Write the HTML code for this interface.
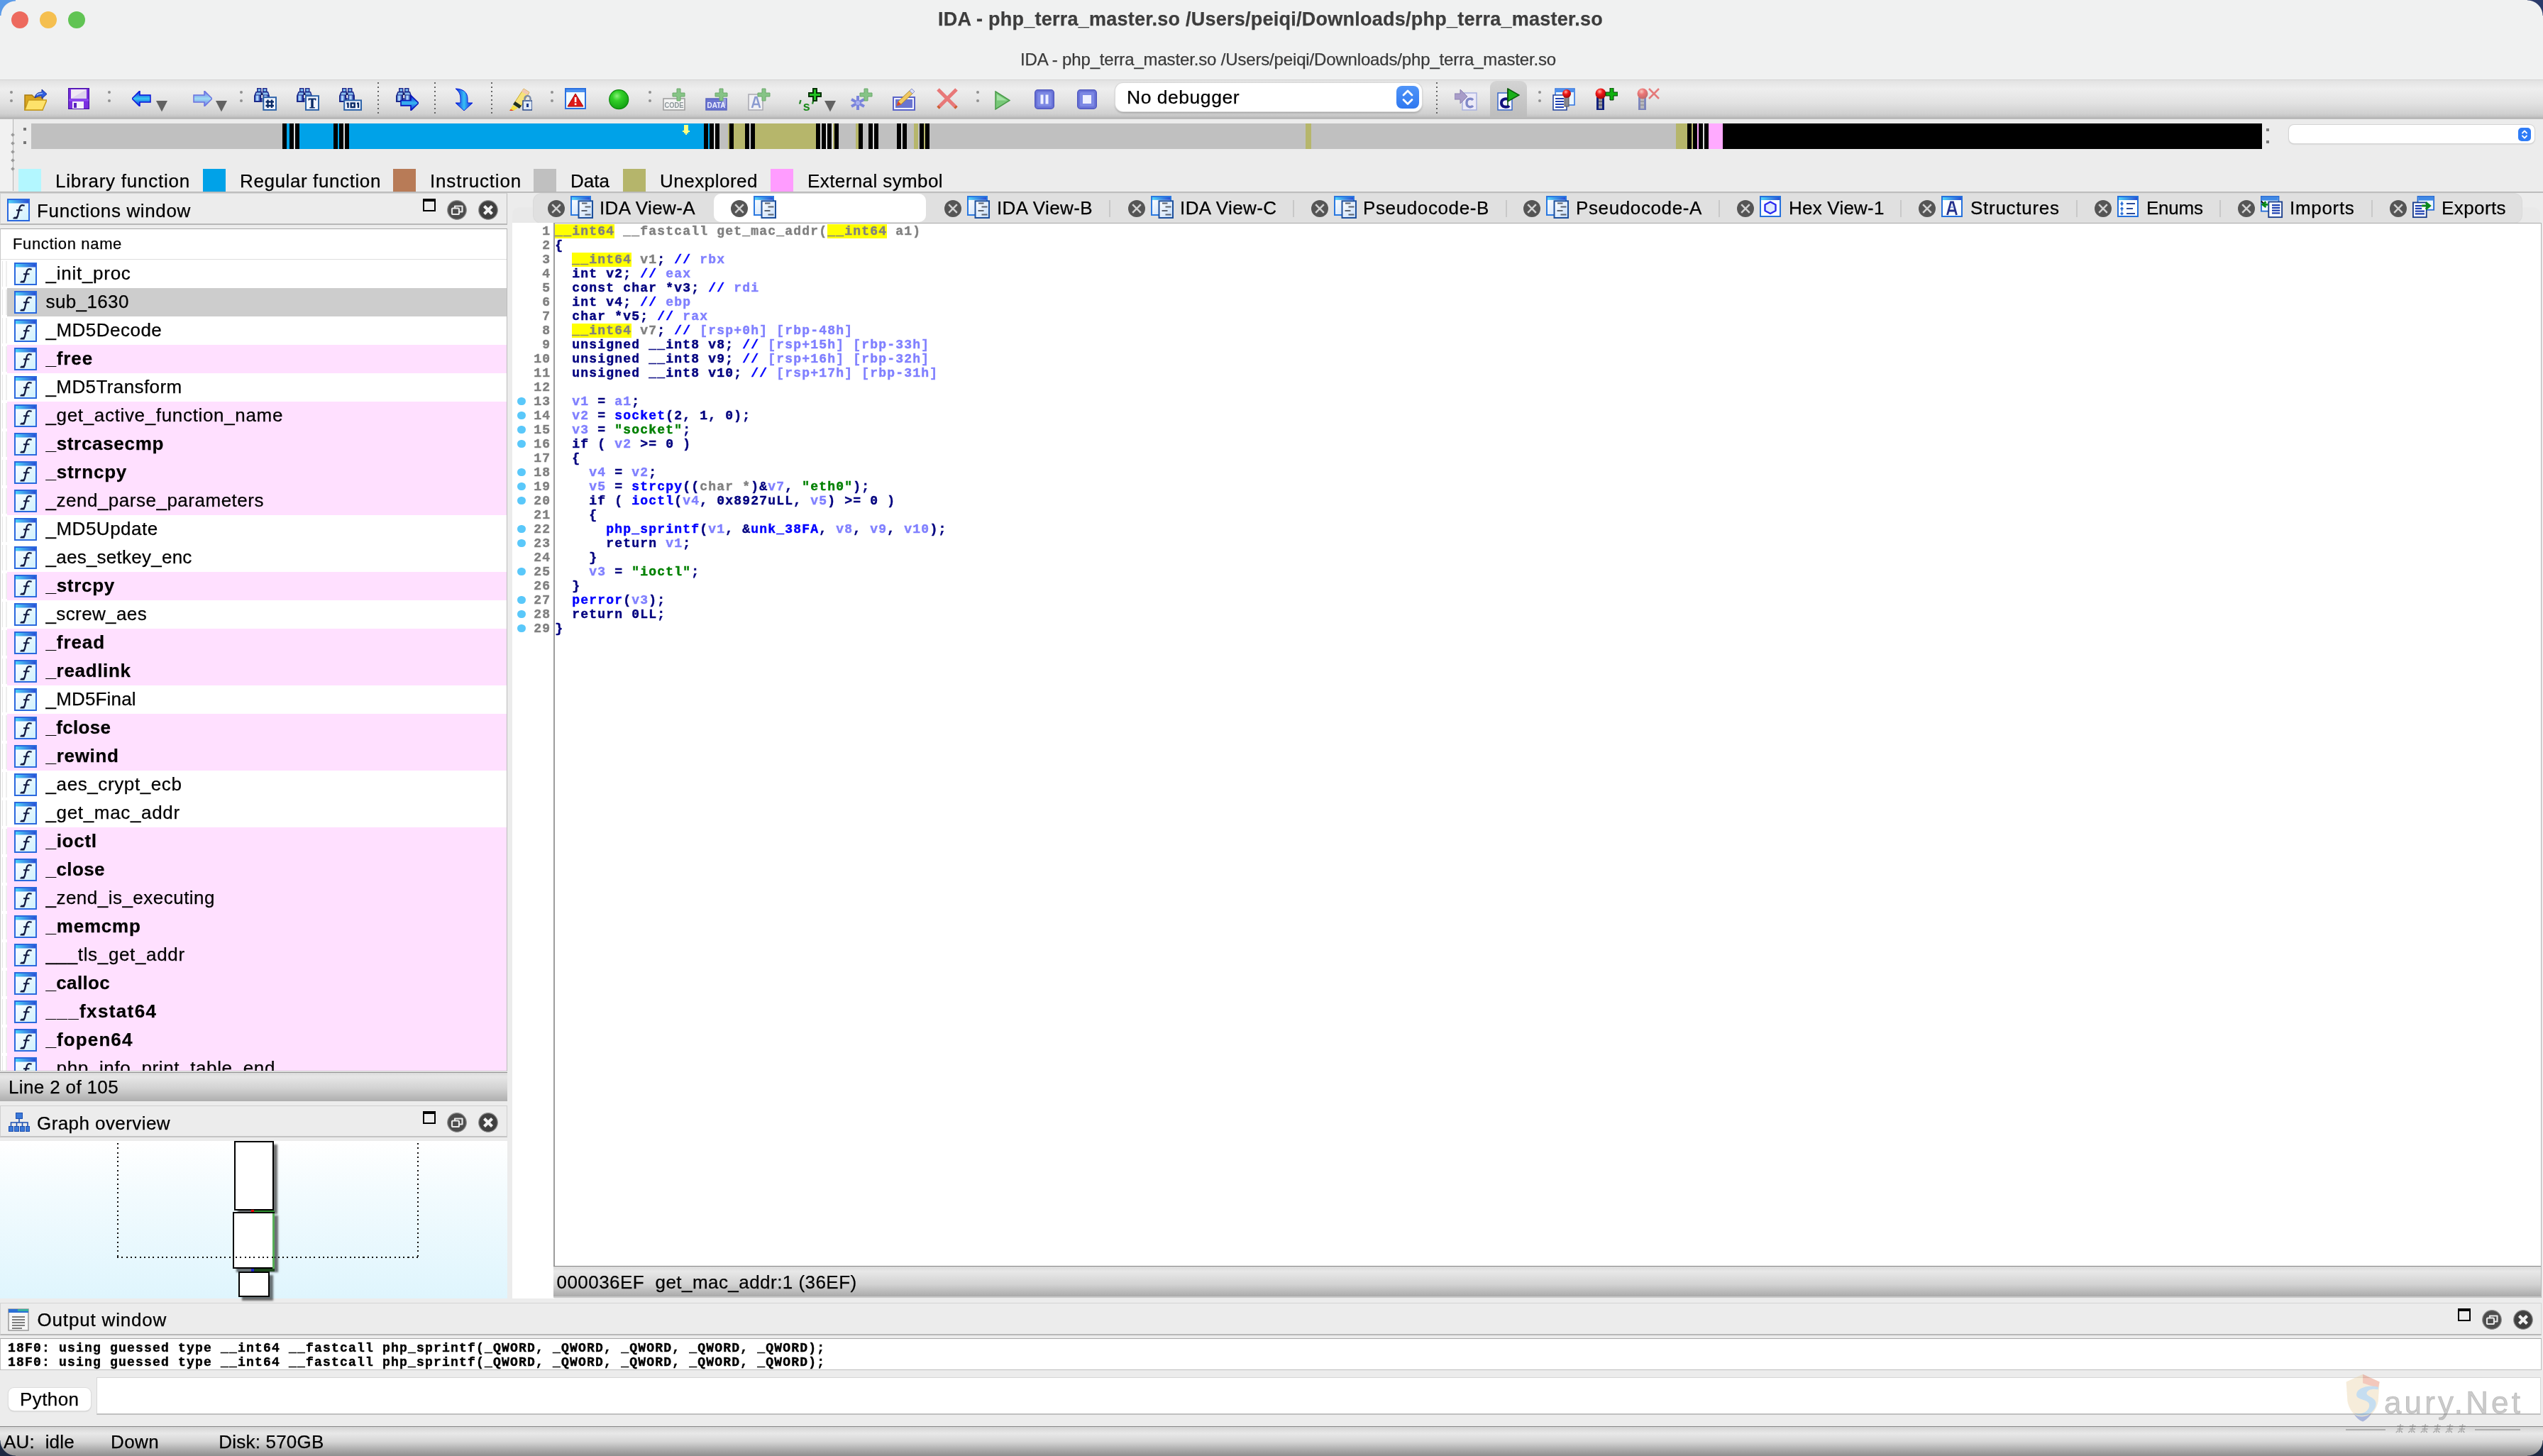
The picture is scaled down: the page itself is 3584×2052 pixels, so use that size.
<!DOCTYPE html>
<html><head><meta charset="utf-8"><title>IDA</title>
<style>
*{box-sizing:border-box;margin:0;padding:0}
html,body{width:3584px;height:2052px;overflow:hidden;background:#ececec}
body{font-family:"Liberation Sans",sans-serif;color:#000;position:relative;transform:translateZ(0);will-change:transform}
.a{position:absolute}
.t{position:absolute;white-space:pre;line-height:1;-webkit-text-stroke:0.25px currentColor}
.ui{font-size:26px}
.mono{font-family:"Liberation Mono",monospace;font-weight:bold;font-size:18px;letter-spacing:1.2px;line-height:20px;-webkit-text-stroke:0.45px currentColor}
</style></head>
<body>
<svg width="0" height="0" style="position:absolute;left:0;top:0"><defs><linearGradient id="fg" x1="0" y1="0" x2="1" y2="1"><stop offset="0" stop-color="#fff"/><stop offset="1" stop-color="#cdf0fd"/></linearGradient><linearGradient id="wt" x1="0" y1="0" x2="1" y2="0"><stop offset="0" stop-color="#4fd4fa"/><stop offset="1" stop-color="#2a50d4"/></linearGradient><linearGradient id="dg" x1="0" y1="0" x2="1" y2="1"><stop offset="0" stop-color="#fff"/><stop offset="1" stop-color="#c4dcf8"/></linearGradient></defs></svg>
<div class="a" style="left:0;top:0;width:3584px;height:112px;background:#f0f1f1"></div>
<div class="a" style="left:16px;top:16px;width:24px;height:24px;border-radius:50%;background:#ed6a5e"></div>
<div class="a" style="left:56px;top:16px;width:24px;height:24px;border-radius:50%;background:#f5bf4f"></div>
<div class="a" style="left:96px;top:16px;width:24px;height:24px;border-radius:50%;background:#61c454"></div>
<div class="t " id="title1" style="left:1322px;top:14px;font-size:27px;font-weight:bold;color:#3d3d3d;letter-spacing:0.245px">IDA - php_terra_master.so /Users/peiqi/Downloads/php_terra_master.so</div>
<div class="t " id="title2" style="left:1438px;top:72px;font-size:24px;color:#3a3a3a;letter-spacing:-0.158px">IDA - php_terra_master.so /Users/peiqi/Downloads/php_terra_master.so</div>
<div class="a" style="left:0;top:112px;width:3584px;height:55.500px;background:linear-gradient(#e2e2e2,#eeeeee 22%,#e2e2e2 58%,#d0d0d0 86%,#c4c4c4 93%,#b4b4b4 97%,#c0c0c0);border-top:1px solid #d4d4d4"></div>
<div class="a" style="left:14px;top:128px;width:4px;height:4px;border-radius:50%;background:#909090"></div><div class="a" style="left:14px;top:140px;width:4px;height:4px;border-radius:50%;background:#909090"></div>
<div class="a" style="left:152px;top:128px;width:4px;height:4px;border-radius:50%;background:#909090"></div><div class="a" style="left:152px;top:140px;width:4px;height:4px;border-radius:50%;background:#909090"></div>
<div class="a" style="left:338px;top:128px;width:4px;height:4px;border-radius:50%;background:#909090"></div><div class="a" style="left:338px;top:140px;width:4px;height:4px;border-radius:50%;background:#909090"></div>
<div class="a" style="left:776px;top:128px;width:4px;height:4px;border-radius:50%;background:#909090"></div><div class="a" style="left:776px;top:140px;width:4px;height:4px;border-radius:50%;background:#909090"></div>
<div class="a" style="left:914px;top:128px;width:4px;height:4px;border-radius:50%;background:#909090"></div><div class="a" style="left:914px;top:140px;width:4px;height:4px;border-radius:50%;background:#909090"></div>
<div class="a" style="left:1376px;top:128px;width:4px;height:4px;border-radius:50%;background:#909090"></div><div class="a" style="left:1376px;top:140px;width:4px;height:4px;border-radius:50%;background:#909090"></div>
<div class="a" style="left:2168px;top:128px;width:4px;height:4px;border-radius:50%;background:#909090"></div><div class="a" style="left:2168px;top:140px;width:4px;height:4px;border-radius:50%;background:#909090"></div>
<div class="a" style="left:532px;top:115.700px;width:2px;height:45px;background:repeating-linear-gradient(#636363 0 2px,transparent 2px 6.050px)"></div>
<div class="a" style="left:611.7px;top:115.700px;width:2px;height:45px;background:repeating-linear-gradient(#636363 0 2px,transparent 2px 6.050px)"></div>
<div class="a" style="left:692px;top:115.700px;width:2px;height:45px;background:repeating-linear-gradient(#636363 0 2px,transparent 2px 6.050px)"></div>
<div class="a" style="left:2024px;top:115.700px;width:2px;height:45px;background:repeating-linear-gradient(#636363 0 2px,transparent 2px 6.050px)"></div>
<svg class="a" style="left:33.5px;top:124px" width="32" height="32" viewBox="0 0 32 32"><path d="M1 10h10l3 3h12v18h-25z" fill="#d9a520" stroke="#a87b10" stroke-width="1.500"/><path d="M6 17h26l-6 14h-25z" fill="#fde26a" stroke="#c89a18" stroke-width="1.500"/><path d="M15 14c1-6 5-8 10-8v-4l7 6.500-7 6.500v-4c-4 0-7 1-10 3z" fill="#2f5fe0" stroke="#1a2f9c" stroke-width="1"/><path d="M18 10c2-2 5-2.500 8-2.500" stroke="#9cc4ff" stroke-width="1.500" fill="none"/></svg>
<svg class="a" style="left:96px;top:124px" width="30" height="30" viewBox="0 0 30 30"><rect x="0.500" y="0.500" width="29" height="29" fill="#7a2fe0" stroke="#4a12a8" stroke-width="1.500"/><rect x="4" y="2" width="22" height="13" fill="#f1e8f4"/><path d="M4 15l22-13v13z" fill="#ded2ee"/><rect x="6" y="19" width="16" height="10" fill="#f4f0fa"/><rect x="8" y="21" width="4" height="7" fill="#5a20c0"/><rect x="1" y="15.500" width="28" height="3" fill="#8d4af0"/></svg>
<svg class="a" style="left:186px;top:128px" width="27" height="22" viewBox="0 0 27 22"><defs><linearGradient id="ba" x1="0" y1="0" x2="0" y2="1"><stop offset="0" stop-color="#0a1adf"/><stop offset=".5" stop-color="#38c8f0"/><stop offset="1" stop-color="#0a1adf"/></linearGradient></defs><path d="M0 11l11-11v6h15v10h-15v6z" fill="url(#ba)" stroke="#0a14d8" stroke-width="1.500"/></svg>
<svg class="a" style="left:220px;top:142px" width="16" height="16" viewBox="0 0 16 16"><path d="M0 0h16l-8 15.500z" fill="#626262"/></svg>
<svg class="a" style="left:272px;top:128px" width="27" height="22" viewBox="0 0 27 22"><defs><linearGradient id="fa" x1="0" y1="0" x2="0" y2="1"><stop offset="0" stop-color="#6a74e8"/><stop offset=".5" stop-color="#9edcf2"/><stop offset="1" stop-color="#6a74e8"/></linearGradient></defs><path d="M27 11l-11-11v6h-15v10h15v6z" fill="url(#fa)" stroke="#6a72e0" stroke-width="1.500"/></svg>
<svg class="a" style="left:304px;top:142px" width="16" height="16" viewBox="0 0 16 16"><path d="M0 0h16l-8 15.500z" fill="#626262"/></svg>
<svg class="a" style="left:358px;top:124px" width="32" height="32" viewBox="0 0 32 32"><g><defs><linearGradient id="bn" x1="0" y1="0" x2="1" y2="0"><stop offset="0" stop-color="#5a8ae0"/><stop offset=".45" stop-color="#bfe4ff"/><stop offset="1" stop-color="#3a5cc0"/></linearGradient></defs><rect x="4" y="0" width="6.500" height="6" fill="#232a8c"/><rect x="12" y="0" width="6.500" height="6" fill="#232a8c"/><rect x="5.500" y="1.500" width="3.500" height="3" fill="#7fc4f4"/><rect x="13.500" y="1.500" width="3.500" height="3" fill="#7fc4f4"/><path d="M2.500 5h8.500v15h-11v-9z" fill="#1c2a8a"/><path d="M11.500 5h8.500l2 6v9h-10.500z" fill="#1c2a8a"/><rect x="9.500" y="7" width="3.500" height="6" fill="#181c60"/><rect x="10.300" y="10" width="2" height="4" fill="#fff"/><path d="M3.500 6.500h6v3h-7z" fill="#8cc0f0"/><path d="M12.500 6.500h6.500l1 3h-7.500z" fill="#8cc0f0"/><rect x="2" y="10.500" width="6" height="7.500" fill="url(#bn)"/><rect x="13.500" y="10.500" width="6" height="7.500" fill="url(#bn)"/></g><rect x="13.300" y="13.200" width="17.700" height="17.700" fill="#f2f6ff" stroke="#2c62a8" stroke-width="2"/><path d="M16.500 19.500h11.500M16.500 25h11.500M19.500 16.500v11.500M25 16.500v11.500" stroke="#0a2a66" stroke-width="2.400"/></svg>
<svg class="a" style="left:418px;top:124px" width="32" height="32" viewBox="0 0 32 32"><g><defs><linearGradient id="bn" x1="0" y1="0" x2="1" y2="0"><stop offset="0" stop-color="#5a8ae0"/><stop offset=".45" stop-color="#bfe4ff"/><stop offset="1" stop-color="#3a5cc0"/></linearGradient></defs><rect x="4" y="0" width="6.500" height="6" fill="#232a8c"/><rect x="12" y="0" width="6.500" height="6" fill="#232a8c"/><rect x="5.500" y="1.500" width="3.500" height="3" fill="#7fc4f4"/><rect x="13.500" y="1.500" width="3.500" height="3" fill="#7fc4f4"/><path d="M2.500 5h8.500v15h-11v-9z" fill="#1c2a8a"/><path d="M11.500 5h8.500l2 6v9h-10.500z" fill="#1c2a8a"/><rect x="9.500" y="7" width="3.500" height="6" fill="#181c60"/><rect x="10.300" y="10" width="2" height="4" fill="#fff"/><path d="M3.500 6.500h6v3h-7z" fill="#8cc0f0"/><path d="M12.500 6.500h6.500l1 3h-7.500z" fill="#8cc0f0"/><rect x="2" y="10.500" width="6" height="7.500" fill="url(#bn)"/><rect x="13.500" y="10.500" width="6" height="7.500" fill="url(#bn)"/></g><rect x="13" y="11.200" width="18" height="19.700" fill="#f2f6ff" stroke="#2c62a8" stroke-width="2"/><path d="M16.500 14.500h11v3h-1.500v-1h-2.300v10.500h2v1.500h-7.400v-1.500h2v-10.500h-2.300v1h-1.500z" fill="#0a2a66"/></svg>
<svg class="a" style="left:478px;top:124px" width="32" height="32" viewBox="0 0 32 32"><g><defs><linearGradient id="bn" x1="0" y1="0" x2="1" y2="0"><stop offset="0" stop-color="#5a8ae0"/><stop offset=".45" stop-color="#bfe4ff"/><stop offset="1" stop-color="#3a5cc0"/></linearGradient></defs><rect x="4" y="0" width="6.500" height="6" fill="#232a8c"/><rect x="12" y="0" width="6.500" height="6" fill="#232a8c"/><rect x="5.500" y="1.500" width="3.500" height="3" fill="#7fc4f4"/><rect x="13.500" y="1.500" width="3.500" height="3" fill="#7fc4f4"/><path d="M2.500 5h8.500v15h-11v-9z" fill="#1c2a8a"/><path d="M11.500 5h8.500l2 6v9h-10.500z" fill="#1c2a8a"/><rect x="9.500" y="7" width="3.500" height="6" fill="#181c60"/><rect x="10.300" y="10" width="2" height="4" fill="#fff"/><path d="M3.500 6.500h6v3h-7z" fill="#8cc0f0"/><path d="M12.500 6.500h6.500l1 3h-7.500z" fill="#8cc0f0"/><rect x="2" y="10.500" width="6" height="7.500" fill="url(#bn)"/><rect x="13.500" y="10.500" width="6" height="7.500" fill="url(#bn)"/></g><rect x="7.200" y="17.400" width="23.800" height="13.500" fill="#f2f6ff" stroke="#2c62a8" stroke-width="2"/><path d="M12.500 20.500v7.500M10.500 21.800h2M27 20.500v7.500M25 21.800h2" stroke="#0a2a66" stroke-width="2.400" fill="none"/><rect x="16.700" y="21.500" width="5" height="5.500" fill="none" stroke="#0a2a66" stroke-width="2.400"/></svg>
<svg class="a" style="left:557.6px;top:124px" width="32" height="32" viewBox="0 0 32 32"><g><defs><linearGradient id="bn" x1="0" y1="0" x2="1" y2="0"><stop offset="0" stop-color="#5a8ae0"/><stop offset=".45" stop-color="#bfe4ff"/><stop offset="1" stop-color="#3a5cc0"/></linearGradient></defs><rect x="4" y="0" width="6.500" height="6" fill="#232a8c"/><rect x="12" y="0" width="6.500" height="6" fill="#232a8c"/><rect x="5.500" y="1.500" width="3.500" height="3" fill="#7fc4f4"/><rect x="13.500" y="1.500" width="3.500" height="3" fill="#7fc4f4"/><path d="M2.500 5h8.500v15h-11v-9z" fill="#1c2a8a"/><path d="M11.500 5h8.500l2 6v9h-10.500z" fill="#1c2a8a"/><rect x="9.500" y="7" width="3.500" height="6" fill="#181c60"/><rect x="10.300" y="10" width="2" height="4" fill="#fff"/><path d="M3.500 6.500h6v3h-7z" fill="#8cc0f0"/><path d="M12.500 6.500h6.500l1 3h-7.500z" fill="#8cc0f0"/><rect x="2" y="10.500" width="6" height="7.500" fill="url(#bn)"/><rect x="13.500" y="10.500" width="6" height="7.500" fill="url(#bn)"/></g><defs><linearGradient id="bna" x1="0" y1="0" x2="0" y2="1"><stop offset="0" stop-color="#0a1adf"/><stop offset=".5" stop-color="#38b8f0"/><stop offset="1" stop-color="#0a1adf"/></linearGradient></defs><path d="M7 17.500h14v-7l11 10.700-11 10.700v-7h-14z" fill="url(#bna)" stroke="#0a14b8" stroke-width="1.600"/></svg>
<svg class="a" style="left:641px;top:124px" width="26" height="32" viewBox="0 0 26 32"><defs><linearGradient id="da" x1="0" y1="0" x2="1" y2="0"><stop offset="0" stop-color="#0a1adf"/><stop offset=".5" stop-color="#38c0f4"/><stop offset="1" stop-color="#0a1adf"/></linearGradient></defs><path d="M1 1c10 0 17 5 17 14v6h7l-12 11-12-11h7v-6c0-6-2-10-7-14z" fill="url(#da)" stroke="#0a20d8" stroke-width="1"/></svg>
<svg class="a" style="left:718px;top:124px" width="32" height="32" viewBox="0 0 32 32"><path d="M20 1l8 5-12 20-9-5z" fill="#f6e27a" stroke="#c8a828" stroke-width="1"/><path d="M20 1l8 5-3 4-8-5z" fill="#f3c8b0"/><path d="M8 19l9 6-3 4-9-6z" fill="#203020"/><path d="M5 24l7 4-6 4h-6z" fill="#f4e040"/><path d="M2 30l4 2h-6z" fill="#e03020"/><rect x="19" y="18" width="13" height="13" fill="#dfe8f4" stroke="#2a4a8c" stroke-width="1.500"/><path d="M21.500 18v-3a4 4 0 0 1 8 0v3" fill="none" stroke="#7a8aa8" stroke-width="2.400"/><rect x="24" y="22" width="3" height="5" fill="#1a3a8c"/></svg>
<svg class="a" style="left:796px;top:124px" width="30" height="30" viewBox="0 0 30 30"><rect x="1" y="1" width="28" height="28" fill="#f2fbff" stroke="#2a70e0" stroke-width="2"/><rect x="2" y="2" width="26" height="4" fill="#4a90f0"/><path d="M15 8l11 18h-22z" fill="#e01818" stroke="#a00808" stroke-width="1"/><rect x="13.800" y="13" width="2.600" height="7" fill="#fff"/><rect x="13.800" y="21.500" width="2.600" height="2.600" fill="#fff"/></svg>
<svg class="a" style="left:857.5px;top:125.5px" width="29" height="29" viewBox="0 0 29 29"><defs><radialGradient id="gb" cx=".4" cy=".32" r=".7"><stop offset="0" stop-color="#8af07a"/><stop offset=".35" stop-color="#32d028"/><stop offset="1" stop-color="#12a012"/></radialGradient></defs><circle cx="14.200" cy="14.200" r="13.500" fill="url(#gb)" stroke="#0c880c" stroke-width="1.200"/></svg>
<svg class="a" style="left:933.7px;top:124px" width="32" height="32" viewBox="0 0 32 32"><rect x="1" y="15" width="30" height="16" fill="#f4f4f4" stroke="#9a9a9a" stroke-width="1.500"/><text x="2.500" y="28" font-family="Liberation Sans" font-weight="bold" font-size="11.500" fill="#8a9498" textLength="27" lengthAdjust="spacingAndGlyphs">CODE</text><path d="M14 7h6v-6h5v6h6v5h-6v6h-5v-6h-6z" fill="#86c486" stroke="#6aa86a" stroke-width="1"/></svg>
<svg class="a" style="left:994px;top:124px" width="32" height="32" viewBox="0 0 32 32"><rect x="1" y="15" width="29" height="16" fill="#6a74d0" stroke="#5a64c0" stroke-width="1.500"/><rect x="24" y="15" width="5" height="10" fill="#9aa2e0"/><text x="2.500" y="28" font-family="Liberation Sans" font-weight="bold" font-size="11.500" fill="#eef0ff" textLength="26" lengthAdjust="spacingAndGlyphs">DATA</text><path d="M14 7h6v-6h5v6h6v5h-6v6h-5v-6h-6z" fill="#86c486" stroke="#6aa86a" stroke-width="1"/></svg>
<svg class="a" style="left:1054px;top:124px" width="32" height="32" viewBox="0 0 32 32"><rect x="1" y="9" width="20" height="22" fill="#f0f0f4" stroke="#a8a8b0" stroke-width="1.500"/><path d="M6 28l4.500-15h2l4.500 15M8 23h7" fill="none" stroke="#8a9ad0" stroke-width="2.600"/><path d="M14 7h6v-6h5v6h6v5h-6v6h-5v-6h-6z" fill="#86c486" stroke="#6aa86a" stroke-width="1"/></svg>
<svg class="a" style="left:1125px;top:124px" width="34" height="34" viewBox="0 0 34 34"><text x="6.300" y="31.500" font-family="Liberation Mono" font-weight="bold" font-size="18" fill="#1a8a1a">s</text><path d="M2 22.500l1.500-5.500M20 22.500l1.500-5.500" stroke="#2a8a2a" stroke-width="2.400"/><path d="M15 7h6v-6h5v6h6v5h-6v6h-5v-6h-6z" fill="#22c022" stroke="#033003" stroke-width="2"/></svg>
<svg class="a" style="left:1162px;top:142px" width="16" height="16" viewBox="0 0 16 16"><path d="M0 0h16l-8 15.500z" fill="#626262"/></svg>
<svg class="a" style="left:1197.8px;top:124px" width="32" height="32" viewBox="0 0 32 32"><path d="M11 11v20M2 16l18 10M2 26l18-10" stroke="#7a84dc" stroke-width="4"/><circle cx="11" cy="21" r="3" fill="#aab2f0"/><path d="M14 7h6v-6h5v6h6v5h-6v6h-5v-6h-6z" fill="#86c486" stroke="#6aa86a" stroke-width="1"/></svg>
<svg class="a" style="left:1258px;top:124px" width="32" height="32" viewBox="0 0 32 32"><rect x="1" y="13" width="30" height="18" fill="#f2f2ff" stroke="#5a64c8" stroke-width="2"/><rect x="4" y="16" width="24" height="12" fill="#6a74d0"/><path d="M27 1l4 4-19 18-6 2 2-6z" fill="#f0c860" stroke="#b08828" stroke-width="1"/><path d="M27 1l4 4-3 3-4-4z" fill="#d8dcf8" stroke="#8a92c8" stroke-width="1"/><path d="M6 25l2-6 4 4z" fill="#e04030"/></svg>
<svg class="a" style="left:1320px;top:124px" width="30" height="30" viewBox="0 0 30 30"><path d="M2 2l26 26M28 2l-26 26" stroke="#e87878" stroke-width="5"/><path d="M2 28l2-2M26 26l2 2" stroke="#c86030" stroke-width="4"/></svg>
<svg class="a" style="left:1402px;top:128px" width="22" height="27" viewBox="0 0 22 27"><path d="M1 1l20 12.500-20 12.500z" fill="#78c878" stroke="#4a9a4a" stroke-width="1.500"/><path d="M3 5l14 8.500h-14z" fill="#a4e0a4"/></svg>
<svg class="a" style="left:1458px;top:126px" width="28" height="28" viewBox="0 0 28 28"><rect x="0.750" y="0.750" width="26.500" height="26.500" rx="4" fill="#6a74d8" stroke="#5058c0" stroke-width="1.500"/><rect x="4" y="4" width="20" height="20" rx="2" fill="#7c88e4"/><rect x="8.500" y="7.500" width="4" height="13" fill="#eef0ff"/><rect x="15.500" y="7.500" width="4" height="13" fill="#eef0ff"/></svg>
<svg class="a" style="left:1518px;top:126px" width="28" height="28" viewBox="0 0 28 28"><rect x="0.750" y="0.750" width="26.500" height="26.500" rx="4" fill="#6a74d8" stroke="#5058c0" stroke-width="1.500"/><rect x="4" y="4" width="20" height="20" rx="2" fill="#7c88e4"/><rect x="8" y="8" width="12" height="12" fill="#eef0ff"/></svg>
<div class="a" style="left:1572px;top:117px;width:432px;height:40px;background:#fff;border-radius:11px;box-shadow:0 0 0 1px #d8d8d8,0 1.500px 3px rgba(0,0,0,.28)"></div>
<div class="t " id="nodbg" style="left:1588px;top:123.5px;font-size:26.5px;letter-spacing:0.525px">No debugger</div>
<div class="a" style="left:1968px;top:121px;width:32px;height:32px;background:linear-gradient(#4f94f8,#2f78f0);border-radius:8px"></div>
<svg class="a" style="left:1968px;top:121px" width="32" height="32" viewBox="0 0 32 32"><path d="M10 13l6-6 6 6M10 19.500l6 6 6-6" stroke="#fff" stroke-width="2.800" fill="none" stroke-linecap="round" stroke-linejoin="round"/></svg>
<svg class="a" style="left:2049.7px;top:124px" width="32" height="32" viewBox="0 0 32 32"><rect x="11" y="7" width="20" height="24" fill="#eceaf8" stroke="#a8b0e0" stroke-width="1.500"/><path d="M26 17c-2-2.500-9-3-9 4s7 6.500 9 4" fill="none" stroke="#8088c8" stroke-width="3.400"/><path d="M0 8h8v-6l10 10-10 10v-6h-8z" fill="#a89cc8" stroke="#8a80b0" stroke-width="1"/></svg>
<div class="a" style="left:2100px;top:114px;width:52px;height:52px;background:linear-gradient(#d4d4d4,#bcbcbc);border-radius:9px 9px 0 0"></div>
<svg class="a" style="left:2110px;top:124px" width="32" height="32" viewBox="0 0 32 32"><rect x="1" y="7" width="20" height="24" fill="#f4f4ff" stroke="#3a68c8" stroke-width="1.500"/><path d="M17 17c-2-2.500-11-3-11 4s9 6.500 11 4" fill="none" stroke="#10107c" stroke-width="4"/><path d="M15 1l16 9-16 9z" fill="#18b018" stroke="#0a600a" stroke-width="1.500"/><path d="M15 1v24" stroke="#0a500a" stroke-width="1.500"/></svg>
<svg class="a" style="left:2188px;top:124px" width="32" height="32" viewBox="0 0 32 32"><defs><radialGradient id="rb" cx=".4" cy=".3" r=".7"><stop offset="0" stop-color="#ffb0a0"/><stop offset=".4" stop-color="#f01818"/><stop offset="1" stop-color="#a00808"/></radialGradient></defs><rect x="4" y="1" width="27" height="23" fill="#eaf6ff" stroke="#2a70e0" stroke-width="1.500"/><rect x="5" y="2" width="25" height="4" fill="#4a90f0"/><rect x="1" y="10" width="19" height="21" fill="#fff" stroke="#1c3f9c" stroke-width="1.500"/><path d="M4 15h12M4 19h12M4 23h12M4 27h12" stroke="#1c3fb0" stroke-width="2.200"/><rect x="17" y="12" width="6" height="14" fill="#8a8a90" stroke="#55555c" stroke-width="1"/><circle cx="20" cy="8" r="6" fill="url(#rb)"/></svg>
<svg class="a" style="left:2248px;top:124px" width="32" height="32" viewBox="0 0 32 32"><defs><radialGradient id="rb2" cx=".4" cy=".3" r=".7"><stop offset="0" stop-color="#ffb0a0"/><stop offset=".4" stop-color="#f01818"/><stop offset="1" stop-color="#a00808"/></radialGradient></defs><rect x="2" y="13" width="11" height="18" fill="#10207c"/><rect x="5" y="14" width="5" height="15" fill="#9a9aa0"/><path d="M5 19h5M5 24h5" stroke="#55555c" stroke-width="1.500"/><circle cx="8" cy="8" r="7.500" fill="url(#rb2)"/><path d="M15 6h6v-6h5v6h6v5h-6v6h-5v-6h-6z" fill="#10b010" stroke="#043c04" stroke-width="1"/></svg>
<svg class="a" style="left:2307.4px;top:124px" width="32" height="32" viewBox="0 0 32 32"><defs><radialGradient id="rb3" cx=".4" cy=".3" r=".7"><stop offset="0" stop-color="#ffb0a0"/><stop offset=".4" stop-color="#f01818"/><stop offset="1" stop-color="#a00808"/></radialGradient></defs><g opacity=".55"><rect x="2" y="13" width="11" height="18" fill="#3040a0"/><rect x="5" y="14" width="5" height="15" fill="#9a9aa0"/><path d="M5 19h5M5 24h5" stroke="#55555c" stroke-width="1.500"/><circle cx="8" cy="8" r="7.500" fill="url(#rb3)"/><path d="M17 1l14 14M31 1l-14 14" stroke="#e02020" stroke-width="2.600"/></g></svg>
<div class="a" style="left:44px;top:174px;width:3144px;height:36px;background:#c0c0c0"></div>
<div class="a" style="left:404px;top:174px;width:588px;height:36px;background:#00a2e8"></div>
<div class="a" style="left:398px;top:174px;width:6px;height:36px;background:#000"></div>
<div class="a" style="left:408px;top:174px;width:6px;height:36px;background:#000"></div>
<div class="a" style="left:414px;top:174px;width:2px;height:36px;background:#dcdcdc"></div>
<div class="a" style="left:416px;top:174px;width:6px;height:36px;background:#000"></div>
<div class="a" style="left:470px;top:174px;width:6px;height:36px;background:#000"></div>
<div class="a" style="left:478px;top:174px;width:6px;height:36px;background:#000"></div>
<div class="a" style="left:484px;top:174px;width:2px;height:36px;background:#dcdcdc"></div>
<div class="a" style="left:486px;top:174px;width:6px;height:36px;background:#000"></div>
<div class="a" style="left:992px;top:174px;width:6px;height:36px;background:#000"></div>
<div class="a" style="left:998px;top:174px;width:2px;height:36px;background:#00a2e8"></div>
<div class="a" style="left:1000px;top:174px;width:6px;height:36px;background:#000"></div>
<div class="a" style="left:1006px;top:174px;width:2px;height:36px;background:#dcdcdc"></div>
<div class="a" style="left:1008px;top:174px;width:6px;height:36px;background:#000"></div>
<div class="a" style="left:1026px;top:174px;width:2px;height:36px;background:#b6b66b"></div>
<div class="a" style="left:1028px;top:174px;width:6px;height:36px;background:#000"></div>
<div class="a" style="left:1034px;top:174px;width:16px;height:36px;background:#b6b66b"></div>
<div class="a" style="left:1050px;top:174px;width:6px;height:36px;background:#000"></div>
<div class="a" style="left:1056px;top:174px;width:2px;height:36px;background:#dcdcdc"></div>
<div class="a" style="left:1058px;top:174px;width:6px;height:36px;background:#000"></div>
<div class="a" style="left:1064px;top:174px;width:86px;height:36px;background:#b6b66b"></div>
<div class="a" style="left:1150px;top:174px;width:6px;height:36px;background:#000"></div>
<div class="a" style="left:1156px;top:174px;width:2px;height:36px;background:#dcdcdc"></div>
<div class="a" style="left:1158px;top:174px;width:6px;height:36px;background:#000"></div>
<div class="a" style="left:1164px;top:174px;width:2px;height:36px;background:#dcdcdc"></div>
<div class="a" style="left:1166px;top:174px;width:6px;height:36px;background:#000"></div>
<div class="a" style="left:1172px;top:174px;width:2px;height:36px;background:#dcdcdc"></div>
<div class="a" style="left:1174px;top:174px;width:2px;height:36px;background:#b6b66b"></div>
<div class="a" style="left:1176px;top:174px;width:6px;height:36px;background:#000"></div>
<div class="a" style="left:1206px;top:174px;width:4px;height:36px;background:#b6b66b"></div>
<div class="a" style="left:1210px;top:174px;width:6px;height:36px;background:#000"></div>
<div class="a" style="left:1224px;top:174px;width:6px;height:36px;background:#000"></div>
<div class="a" style="left:1230px;top:174px;width:2px;height:36px;background:#dcdcdc"></div>
<div class="a" style="left:1232px;top:174px;width:6px;height:36px;background:#000"></div>
<div class="a" style="left:1264px;top:174px;width:6px;height:36px;background:#000"></div>
<div class="a" style="left:1270px;top:174px;width:2px;height:36px;background:#dcdcdc"></div>
<div class="a" style="left:1272px;top:174px;width:6px;height:36px;background:#000"></div>
<div class="a" style="left:1288px;top:174px;width:6px;height:36px;background:#b6b66b"></div>
<div class="a" style="left:1296px;top:174px;width:6px;height:36px;background:#000"></div>
<div class="a" style="left:1302px;top:174px;width:2px;height:36px;background:#b6b66b"></div>
<div class="a" style="left:1304px;top:174px;width:6px;height:36px;background:#000"></div>
<div class="a" style="left:1840px;top:174px;width:8px;height:36px;background:#b6b66b"></div>
<div class="a" style="left:2362px;top:174px;width:16px;height:36px;background:#b6b66b"></div>
<div class="a" style="left:2378px;top:174px;width:6px;height:36px;background:#000"></div>
<div class="a" style="left:2384px;top:174px;width:2px;height:36px;background:#b6b66b"></div>
<div class="a" style="left:2386px;top:174px;width:6px;height:36px;background:#000"></div>
<div class="a" style="left:2392px;top:174px;width:2px;height:36px;background:#ffaaff"></div>
<div class="a" style="left:2394px;top:174px;width:6px;height:36px;background:#000"></div>
<div class="a" style="left:2400px;top:174px;width:2px;height:36px;background:#dcdcdc"></div>
<div class="a" style="left:2402px;top:174px;width:6px;height:36px;background:#000"></div>
<div class="a" style="left:2408px;top:174px;width:20px;height:36px;background:#ffaaff"></div>
<div class="a" style="left:2428px;top:174px;width:760px;height:36px;background:#000"></div>
<svg class="a" style="left:962px;top:176px" width="10" height="14" viewBox="0 0 10 14"><path d="M2 0h6v8h2v2h-2v2h-2v2h-2v-2h-2v-2h-2v-2h2z" fill="#ffff80"/></svg>
<div class="a" style="left:33px;top:180px;width:4px;height:4px;background:#777"></div>
<div class="a" style="left:33px;top:199px;width:4px;height:4px;background:#777"></div>
<div class="a" style="left:3194px;top:181px;width:4px;height:4px;background:#777"></div>
<div class="a" style="left:3194px;top:198px;width:4px;height:4px;background:#777"></div>
<div class="a" style="left:0;top:168px;width:17.500px;height:101px;background:#f1f1f1"></div>
<div class="a" style="left:17.500px;top:168px;width:1.500px;height:101px;background:#b4b4b4"></div>
<div class="a" style="left:16px;top:188px;width:4px;height:4px;background:#9a9a9a;transform:rotate(45deg)"></div>
<div class="a" style="left:16px;top:200px;width:4px;height:4px;background:#9a9a9a;transform:rotate(45deg)"></div>
<div class="a" style="left:16px;top:212px;width:4px;height:4px;background:#9a9a9a;transform:rotate(45deg)"></div>
<div class="a" style="left:16px;top:224px;width:4px;height:4px;background:#9a9a9a;transform:rotate(45deg)"></div>
<div class="a" style="left:16px;top:236px;width:4px;height:4px;background:#9a9a9a;transform:rotate(45deg)"></div>
<div class="a" style="left:3226px;top:176px;width:346px;height:26px;background:#fff;border-radius:7px;box-shadow:0 0 0 1px #d4d4d4,0 1px 2px rgba(0,0,0,.25)"></div>
<div class="a" style="left:3549px;top:180px;width:18px;height:19px;background:#2f7cf6;border-radius:5px"></div>
<svg class="a" style="left:3549px;top:180px" width="18" height="19" viewBox="0 0 18 19"><path d="M6 7.5l3-3 3 3M6 11.500l3 3 3-3" stroke="#fff" stroke-width="1.8" fill="none" stroke-linecap="round" stroke-linejoin="round"/></svg>
<div class="a" style="left:26px;top:238px;width:32px;height:32px;background:#b3f7ff"></div>
<div class="t lg" style="left:78px;top:241.8px;font-size:26px;letter-spacing:0.765px">Library function</div>
<div class="a" style="left:286px;top:238px;width:32px;height:32px;background:#00a2e8"></div>
<div class="t lg" style="left:338px;top:241.8px;font-size:26px;letter-spacing:0.604px">Regular function</div>
<div class="a" style="left:554px;top:238px;width:32px;height:32px;background:#b87b57"></div>
<div class="t lg" style="left:606px;top:241.8px;font-size:26px;letter-spacing:0.823px">Instruction</div>
<div class="a" style="left:752px;top:238px;width:32px;height:32px;background:#c0c0c0"></div>
<div class="t lg" style="left:804px;top:241.8px;font-size:26px;letter-spacing:0.02px">Data</div>
<div class="a" style="left:878px;top:238px;width:32px;height:32px;background:#b5b56b"></div>
<div class="t lg" style="left:930px;top:241.8px;font-size:26px;letter-spacing:0.503px">Unexplored</div>
<div class="a" style="left:1086px;top:238px;width:32px;height:32px;background:#ff9cff"></div>
<div class="t lg" style="left:1138px;top:241.8px;font-size:26px;letter-spacing:0.403px">External symbol</div>
<div class="a" style="left:0;top:269.500px;width:3584px;height:2px;background:linear-gradient(#b0b0b0,#c8c8c8)"></div>
<div class="a" style="left:0;top:272px;width:715px;height:44.700px;background:#ececec;border:1px solid #d4d4d4;border-right:1.300px solid #bcbcbc;border-bottom:2px solid #b8b8b8"></div>
<svg class="a" style="left:10px;top:280px" width="32" height="32" viewBox="0 0 32 32"><rect x="1" y="1" width="30" height="30" fill="url(#fg)" stroke="#2a68de" stroke-width="2"/><rect x="2" y="2" width="28" height="4.500" fill="url(#wt)"/><path d="M23.500 9.500c-3.800-1.200-5.400.8-6 3.800l-2.600 11c-.5 2.200-1.600 3-4 2.600" stroke="#121a40" stroke-width="2.300" fill="none" stroke-linecap="square"/><path d="M13 16.200h8.500M8.500 27.500h6" stroke="#121a40" stroke-width="2" stroke-linecap="butt"/></svg>
<div class="t " id="fwt" style="left:52px;top:284px;font-size:26px;letter-spacing:0.647px">Functions window</div>
<div class="a" style="left:596px;top:280px;width:18px;height:18px;border:2px solid #000;border-top-width:4px;background:#ededed"></div>
<svg class="a" style="left:629px;top:281px" width="30" height="30" viewBox="0 0 30 30"><circle cx="15" cy="15" r="13.300" fill="#4c4c4c"/><circle cx="15" cy="15" r="13.300" fill="none" stroke="#8e8e8e" stroke-width="1.200"/><rect x="8" y="12.500" width="10" height="8.500" rx="1.500" fill="none" stroke="#e8e8e8" stroke-width="2.200"/><path d="M12 12v-2.500h10.500v8h-4" fill="none" stroke="#e8e8e8" stroke-width="2.200" stroke-linejoin="round"/></svg>
<svg class="a" style="left:673px;top:281px" width="30" height="30" viewBox="0 0 30 30"><circle cx="15" cy="15" r="13.300" fill="#404040"/><circle cx="15" cy="15" r="13.300" fill="none" stroke="#8e8e8e" stroke-width="1.200"/><path d="M9.500 9.500l11 11M20.500 9.500l-11 11" stroke="#f2f2f2" stroke-width="4.200" stroke-linecap="butt"/></svg>
<div class="a" style="left:0;top:322px;width:715px;height:1188px;background:#fff;border:1px solid #c8c8c8;border-top:1.300px solid #a8a8a8;border-right:1.300px solid #bcbcbc;overflow:hidden" id="flist">
<div class="t " id="fnh" style="left:17px;top:9.5px;font-size:22px;letter-spacing:0.652px">Function name</div>
<div class="a" style="left:0;top:41.500px;width:716px;height:1.500px;background:#dedede"></div>
<div class="a" style="left:9px;top:43px;width:706px;height:40px;background:#fff"></div>
<div class="a" style="left:1.500px;top:45px;width:1.600px;height:36px;background:#e6e6e6"></div><div class="a" style="left:7px;top:45px;width:1.700px;height:36px;background:#eee"></div>
<svg class="a" style="left:19px;top:47px" width="32" height="32" viewBox="0 0 32 32"><rect x="1" y="1" width="30" height="30" fill="url(#fg)" stroke="#2a68de" stroke-width="2"/><rect x="2" y="2" width="28" height="4.500" fill="url(#wt)"/><path d="M23.500 9.500c-3.800-1.200-5.400.8-6 3.800l-2.600 11c-.5 2.200-1.600 3-4 2.600" stroke="#121a40" stroke-width="2.300" fill="none" stroke-linecap="square"/><path d="M13 16.200h8.500M8.500 27.500h6" stroke="#121a40" stroke-width="2" stroke-linecap="butt"/></svg>
<div class="t fn" style="left:63.5px;top:48.5px;font-size:26px;letter-spacing:0.737px">_init_proc</div>
<div class="a" style="left:9px;top:83px;width:706px;height:40px;background:#cdcdcd"></div>
<div class="a" style="left:1.500px;top:85px;width:1.600px;height:36px;background:#e6e6e6"></div><div class="a" style="left:7px;top:85px;width:1.700px;height:36px;background:#eee"></div>
<svg class="a" style="left:19px;top:87px" width="32" height="32" viewBox="0 0 32 32"><rect x="1" y="1" width="30" height="30" fill="url(#fg)" stroke="#2a68de" stroke-width="2"/><rect x="2" y="2" width="28" height="4.500" fill="url(#wt)"/><path d="M23.500 9.500c-3.800-1.200-5.400.8-6 3.800l-2.600 11c-.5 2.200-1.600 3-4 2.600" stroke="#121a40" stroke-width="2.300" fill="none" stroke-linecap="square"/><path d="M13 16.200h8.500M8.500 27.500h6" stroke="#121a40" stroke-width="2" stroke-linecap="butt"/></svg>
<div class="t fn" style="left:63.5px;top:88.5px;font-size:26px;letter-spacing:0.385px">sub_1630</div>
<div class="a" style="left:9px;top:123px;width:706px;height:40px;background:#fff"></div>
<div class="a" style="left:1.500px;top:125px;width:1.600px;height:36px;background:#e6e6e6"></div><div class="a" style="left:7px;top:125px;width:1.700px;height:36px;background:#eee"></div>
<svg class="a" style="left:19px;top:127px" width="32" height="32" viewBox="0 0 32 32"><rect x="1" y="1" width="30" height="30" fill="url(#fg)" stroke="#2a68de" stroke-width="2"/><rect x="2" y="2" width="28" height="4.500" fill="url(#wt)"/><path d="M23.500 9.500c-3.800-1.200-5.400.8-6 3.800l-2.600 11c-.5 2.200-1.600 3-4 2.600" stroke="#121a40" stroke-width="2.300" fill="none" stroke-linecap="square"/><path d="M13 16.200h8.500M8.500 27.500h6" stroke="#121a40" stroke-width="2" stroke-linecap="butt"/></svg>
<div class="t fn" style="left:63.5px;top:128.5px;font-size:26px;letter-spacing:0.483px">_MD5Decode</div>
<div class="a" style="left:9px;top:163px;width:706px;height:40px;background:#ffe0ff"></div>
<div class="a" style="left:1.500px;top:165px;width:1.600px;height:36px;background:#e6e6e6"></div><div class="a" style="left:7px;top:165px;width:1.700px;height:36px;background:#eee"></div>
<svg class="a" style="left:19px;top:167px" width="32" height="32" viewBox="0 0 32 32"><rect x="1" y="1" width="30" height="30" fill="url(#fg)" stroke="#2a68de" stroke-width="2"/><rect x="2" y="2" width="28" height="4.500" fill="url(#wt)"/><path d="M23.500 9.500c-3.800-1.200-5.400.8-6 3.800l-2.600 11c-.5 2.200-1.600 3-4 2.600" stroke="#121a40" stroke-width="2.300" fill="none" stroke-linecap="square"/><path d="M13 16.200h8.500M8.500 27.500h6" stroke="#121a40" stroke-width="2" stroke-linecap="butt"/></svg>
<div class="t fn" style="left:63.5px;top:168.5px;font-size:26px;font-weight:bold;letter-spacing:0.869px">_free</div>
<div class="a" style="left:9px;top:203px;width:706px;height:40px;background:#fff"></div>
<div class="a" style="left:1.500px;top:205px;width:1.600px;height:36px;background:#e6e6e6"></div><div class="a" style="left:7px;top:205px;width:1.700px;height:36px;background:#eee"></div>
<svg class="a" style="left:19px;top:207px" width="32" height="32" viewBox="0 0 32 32"><rect x="1" y="1" width="30" height="30" fill="url(#fg)" stroke="#2a68de" stroke-width="2"/><rect x="2" y="2" width="28" height="4.500" fill="url(#wt)"/><path d="M23.500 9.500c-3.800-1.200-5.400.8-6 3.800l-2.600 11c-.5 2.200-1.600 3-4 2.600" stroke="#121a40" stroke-width="2.300" fill="none" stroke-linecap="square"/><path d="M13 16.200h8.500M8.500 27.500h6" stroke="#121a40" stroke-width="2" stroke-linecap="butt"/></svg>
<div class="t fn" style="left:63.5px;top:208.5px;font-size:26px;letter-spacing:0.396px">_MD5Transform</div>
<div class="a" style="left:9px;top:243px;width:706px;height:40px;background:#ffe0ff"></div>
<div class="a" style="left:1.500px;top:245px;width:1.600px;height:36px;background:#e6e6e6"></div><div class="a" style="left:7px;top:245px;width:1.700px;height:36px;background:#eee"></div>
<svg class="a" style="left:19px;top:247px" width="32" height="32" viewBox="0 0 32 32"><rect x="1" y="1" width="30" height="30" fill="url(#fg)" stroke="#2a68de" stroke-width="2"/><rect x="2" y="2" width="28" height="4.500" fill="url(#wt)"/><path d="M23.500 9.500c-3.800-1.200-5.400.8-6 3.800l-2.600 11c-.5 2.200-1.600 3-4 2.600" stroke="#121a40" stroke-width="2.300" fill="none" stroke-linecap="square"/><path d="M13 16.200h8.500M8.500 27.500h6" stroke="#121a40" stroke-width="2" stroke-linecap="butt"/></svg>
<div class="t fn" style="left:63.5px;top:248.5px;font-size:26px;letter-spacing:0.66px">_get_active_function_name</div>
<div class="a" style="left:9px;top:283px;width:706px;height:40px;background:#ffe0ff"></div>
<div class="a" style="left:1.500px;top:285px;width:1.600px;height:36px;background:#e6e6e6"></div><div class="a" style="left:7px;top:285px;width:1.700px;height:36px;background:#eee"></div>
<svg class="a" style="left:19px;top:287px" width="32" height="32" viewBox="0 0 32 32"><rect x="1" y="1" width="30" height="30" fill="url(#fg)" stroke="#2a68de" stroke-width="2"/><rect x="2" y="2" width="28" height="4.500" fill="url(#wt)"/><path d="M23.500 9.500c-3.800-1.200-5.400.8-6 3.800l-2.600 11c-.5 2.200-1.600 3-4 2.600" stroke="#121a40" stroke-width="2.300" fill="none" stroke-linecap="square"/><path d="M13 16.200h8.500M8.500 27.500h6" stroke="#121a40" stroke-width="2" stroke-linecap="butt"/></svg>
<div class="t fn" style="left:63.5px;top:288.5px;font-size:26px;font-weight:bold;letter-spacing:0.682px">_strcasecmp</div>
<div class="a" style="left:9px;top:323px;width:706px;height:40px;background:#ffe0ff"></div>
<div class="a" style="left:1.500px;top:325px;width:1.600px;height:36px;background:#e6e6e6"></div><div class="a" style="left:7px;top:325px;width:1.700px;height:36px;background:#eee"></div>
<svg class="a" style="left:19px;top:327px" width="32" height="32" viewBox="0 0 32 32"><rect x="1" y="1" width="30" height="30" fill="url(#fg)" stroke="#2a68de" stroke-width="2"/><rect x="2" y="2" width="28" height="4.500" fill="url(#wt)"/><path d="M23.500 9.500c-3.800-1.200-5.400.8-6 3.800l-2.600 11c-.5 2.200-1.600 3-4 2.600" stroke="#121a40" stroke-width="2.300" fill="none" stroke-linecap="square"/><path d="M13 16.200h8.500M8.500 27.500h6" stroke="#121a40" stroke-width="2" stroke-linecap="butt"/></svg>
<div class="t fn" style="left:63.5px;top:328.5px;font-size:26px;font-weight:bold;letter-spacing:0.765px">_strncpy</div>
<div class="a" style="left:9px;top:363px;width:706px;height:40px;background:#ffe0ff"></div>
<div class="a" style="left:1.500px;top:365px;width:1.600px;height:36px;background:#e6e6e6"></div><div class="a" style="left:7px;top:365px;width:1.700px;height:36px;background:#eee"></div>
<svg class="a" style="left:19px;top:367px" width="32" height="32" viewBox="0 0 32 32"><rect x="1" y="1" width="30" height="30" fill="url(#fg)" stroke="#2a68de" stroke-width="2"/><rect x="2" y="2" width="28" height="4.500" fill="url(#wt)"/><path d="M23.500 9.500c-3.800-1.200-5.400.8-6 3.800l-2.600 11c-.5 2.200-1.600 3-4 2.600" stroke="#121a40" stroke-width="2.300" fill="none" stroke-linecap="square"/><path d="M13 16.200h8.500M8.500 27.500h6" stroke="#121a40" stroke-width="2" stroke-linecap="butt"/></svg>
<div class="t fn" style="left:63.5px;top:368.5px;font-size:26px;letter-spacing:0.509px">_zend_parse_parameters</div>
<div class="a" style="left:9px;top:403px;width:706px;height:40px;background:#fff"></div>
<div class="a" style="left:1.500px;top:405px;width:1.600px;height:36px;background:#e6e6e6"></div><div class="a" style="left:7px;top:405px;width:1.700px;height:36px;background:#eee"></div>
<svg class="a" style="left:19px;top:407px" width="32" height="32" viewBox="0 0 32 32"><rect x="1" y="1" width="30" height="30" fill="url(#fg)" stroke="#2a68de" stroke-width="2"/><rect x="2" y="2" width="28" height="4.500" fill="url(#wt)"/><path d="M23.500 9.500c-3.800-1.200-5.400.8-6 3.800l-2.600 11c-.5 2.200-1.600 3-4 2.600" stroke="#121a40" stroke-width="2.300" fill="none" stroke-linecap="square"/><path d="M13 16.200h8.500M8.500 27.500h6" stroke="#121a40" stroke-width="2" stroke-linecap="butt"/></svg>
<div class="t fn" style="left:63.5px;top:408.5px;font-size:26px;letter-spacing:0.501px">_MD5Update</div>
<div class="a" style="left:9px;top:443px;width:706px;height:40px;background:#fff"></div>
<div class="a" style="left:1.500px;top:445px;width:1.600px;height:36px;background:#e6e6e6"></div><div class="a" style="left:7px;top:445px;width:1.700px;height:36px;background:#eee"></div>
<svg class="a" style="left:19px;top:447px" width="32" height="32" viewBox="0 0 32 32"><rect x="1" y="1" width="30" height="30" fill="url(#fg)" stroke="#2a68de" stroke-width="2"/><rect x="2" y="2" width="28" height="4.500" fill="url(#wt)"/><path d="M23.500 9.500c-3.800-1.200-5.400.8-6 3.800l-2.600 11c-.5 2.200-1.600 3-4 2.600" stroke="#121a40" stroke-width="2.300" fill="none" stroke-linecap="square"/><path d="M13 16.200h8.500M8.500 27.500h6" stroke="#121a40" stroke-width="2" stroke-linecap="butt"/></svg>
<div class="t fn" style="left:63.5px;top:448.5px;font-size:26px;letter-spacing:0.249px">_aes_setkey_enc</div>
<div class="a" style="left:9px;top:483px;width:706px;height:40px;background:#ffe0ff"></div>
<div class="a" style="left:1.500px;top:485px;width:1.600px;height:36px;background:#e6e6e6"></div><div class="a" style="left:7px;top:485px;width:1.700px;height:36px;background:#eee"></div>
<svg class="a" style="left:19px;top:487px" width="32" height="32" viewBox="0 0 32 32"><rect x="1" y="1" width="30" height="30" fill="url(#fg)" stroke="#2a68de" stroke-width="2"/><rect x="2" y="2" width="28" height="4.500" fill="url(#wt)"/><path d="M23.500 9.500c-3.800-1.200-5.400.8-6 3.800l-2.600 11c-.5 2.200-1.600 3-4 2.600" stroke="#121a40" stroke-width="2.300" fill="none" stroke-linecap="square"/><path d="M13 16.200h8.500M8.500 27.500h6" stroke="#121a40" stroke-width="2" stroke-linecap="butt"/></svg>
<div class="t fn" style="left:63.5px;top:488.5px;font-size:26px;font-weight:bold;letter-spacing:0.715px">_strcpy</div>
<div class="a" style="left:9px;top:523px;width:706px;height:40px;background:#fff"></div>
<div class="a" style="left:1.500px;top:525px;width:1.600px;height:36px;background:#e6e6e6"></div><div class="a" style="left:7px;top:525px;width:1.700px;height:36px;background:#eee"></div>
<svg class="a" style="left:19px;top:527px" width="32" height="32" viewBox="0 0 32 32"><rect x="1" y="1" width="30" height="30" fill="url(#fg)" stroke="#2a68de" stroke-width="2"/><rect x="2" y="2" width="28" height="4.500" fill="url(#wt)"/><path d="M23.500 9.500c-3.800-1.200-5.400.8-6 3.800l-2.600 11c-.5 2.200-1.600 3-4 2.600" stroke="#121a40" stroke-width="2.300" fill="none" stroke-linecap="square"/><path d="M13 16.200h8.500M8.500 27.500h6" stroke="#121a40" stroke-width="2" stroke-linecap="butt"/></svg>
<div class="t fn" style="left:63.5px;top:528.5px;font-size:26px;letter-spacing:0.377px">_screw_aes</div>
<div class="a" style="left:9px;top:563px;width:706px;height:40px;background:#ffe0ff"></div>
<div class="a" style="left:1.500px;top:565px;width:1.600px;height:36px;background:#e6e6e6"></div><div class="a" style="left:7px;top:565px;width:1.700px;height:36px;background:#eee"></div>
<svg class="a" style="left:19px;top:567px" width="32" height="32" viewBox="0 0 32 32"><rect x="1" y="1" width="30" height="30" fill="url(#fg)" stroke="#2a68de" stroke-width="2"/><rect x="2" y="2" width="28" height="4.500" fill="url(#wt)"/><path d="M23.500 9.500c-3.800-1.200-5.400.8-6 3.800l-2.600 11c-.5 2.200-1.600 3-4 2.600" stroke="#121a40" stroke-width="2.300" fill="none" stroke-linecap="square"/><path d="M13 16.200h8.500M8.500 27.500h6" stroke="#121a40" stroke-width="2" stroke-linecap="butt"/></svg>
<div class="t fn" style="left:63.5px;top:568.5px;font-size:26px;font-weight:bold;letter-spacing:0.91px">_fread</div>
<div class="a" style="left:9px;top:603px;width:706px;height:40px;background:#ffe0ff"></div>
<div class="a" style="left:1.500px;top:605px;width:1.600px;height:36px;background:#e6e6e6"></div><div class="a" style="left:7px;top:605px;width:1.700px;height:36px;background:#eee"></div>
<svg class="a" style="left:19px;top:607px" width="32" height="32" viewBox="0 0 32 32"><rect x="1" y="1" width="30" height="30" fill="url(#fg)" stroke="#2a68de" stroke-width="2"/><rect x="2" y="2" width="28" height="4.500" fill="url(#wt)"/><path d="M23.500 9.500c-3.800-1.200-5.400.8-6 3.800l-2.600 11c-.5 2.200-1.600 3-4 2.600" stroke="#121a40" stroke-width="2.300" fill="none" stroke-linecap="square"/><path d="M13 16.200h8.500M8.500 27.500h6" stroke="#121a40" stroke-width="2" stroke-linecap="butt"/></svg>
<div class="t fn" style="left:63.5px;top:608.5px;font-size:26px;font-weight:bold;letter-spacing:0.659px">_readlink</div>
<div class="a" style="left:9px;top:643px;width:706px;height:40px;background:#fff"></div>
<div class="a" style="left:1.500px;top:645px;width:1.600px;height:36px;background:#e6e6e6"></div><div class="a" style="left:7px;top:645px;width:1.700px;height:36px;background:#eee"></div>
<svg class="a" style="left:19px;top:647px" width="32" height="32" viewBox="0 0 32 32"><rect x="1" y="1" width="30" height="30" fill="url(#fg)" stroke="#2a68de" stroke-width="2"/><rect x="2" y="2" width="28" height="4.500" fill="url(#wt)"/><path d="M23.500 9.500c-3.800-1.200-5.400.8-6 3.800l-2.600 11c-.5 2.200-1.600 3-4 2.600" stroke="#121a40" stroke-width="2.300" fill="none" stroke-linecap="square"/><path d="M13 16.200h8.500M8.500 27.500h6" stroke="#121a40" stroke-width="2" stroke-linecap="butt"/></svg>
<div class="t fn" style="left:63.5px;top:648.5px;font-size:26px;letter-spacing:0.166px">_MD5Final</div>
<div class="a" style="left:9px;top:683px;width:706px;height:40px;background:#ffe0ff"></div>
<div class="a" style="left:1.500px;top:685px;width:1.600px;height:36px;background:#e6e6e6"></div><div class="a" style="left:7px;top:685px;width:1.700px;height:36px;background:#eee"></div>
<svg class="a" style="left:19px;top:687px" width="32" height="32" viewBox="0 0 32 32"><rect x="1" y="1" width="30" height="30" fill="url(#fg)" stroke="#2a68de" stroke-width="2"/><rect x="2" y="2" width="28" height="4.500" fill="url(#wt)"/><path d="M23.500 9.500c-3.800-1.200-5.400.8-6 3.800l-2.600 11c-.5 2.200-1.600 3-4 2.600" stroke="#121a40" stroke-width="2.300" fill="none" stroke-linecap="square"/><path d="M13 16.200h8.500M8.500 27.500h6" stroke="#121a40" stroke-width="2" stroke-linecap="butt"/></svg>
<div class="t fn" style="left:63.5px;top:688.5px;font-size:26px;font-weight:bold;letter-spacing:0.328px">_fclose</div>
<div class="a" style="left:9px;top:723px;width:706px;height:40px;background:#ffe0ff"></div>
<div class="a" style="left:1.500px;top:725px;width:1.600px;height:36px;background:#e6e6e6"></div><div class="a" style="left:7px;top:725px;width:1.700px;height:36px;background:#eee"></div>
<svg class="a" style="left:19px;top:727px" width="32" height="32" viewBox="0 0 32 32"><rect x="1" y="1" width="30" height="30" fill="url(#fg)" stroke="#2a68de" stroke-width="2"/><rect x="2" y="2" width="28" height="4.500" fill="url(#wt)"/><path d="M23.500 9.500c-3.800-1.200-5.400.8-6 3.800l-2.600 11c-.5 2.200-1.600 3-4 2.600" stroke="#121a40" stroke-width="2.300" fill="none" stroke-linecap="square"/><path d="M13 16.200h8.500M8.500 27.500h6" stroke="#121a40" stroke-width="2" stroke-linecap="butt"/></svg>
<div class="t fn" style="left:63.5px;top:728.5px;font-size:26px;font-weight:bold;letter-spacing:0.707px">_rewind</div>
<div class="a" style="left:9px;top:763px;width:706px;height:40px;background:#fff"></div>
<div class="a" style="left:1.500px;top:765px;width:1.600px;height:36px;background:#e6e6e6"></div><div class="a" style="left:7px;top:765px;width:1.700px;height:36px;background:#eee"></div>
<svg class="a" style="left:19px;top:767px" width="32" height="32" viewBox="0 0 32 32"><rect x="1" y="1" width="30" height="30" fill="url(#fg)" stroke="#2a68de" stroke-width="2"/><rect x="2" y="2" width="28" height="4.500" fill="url(#wt)"/><path d="M23.500 9.500c-3.800-1.200-5.400.8-6 3.800l-2.600 11c-.5 2.200-1.600 3-4 2.600" stroke="#121a40" stroke-width="2.300" fill="none" stroke-linecap="square"/><path d="M13 16.200h8.500M8.500 27.500h6" stroke="#121a40" stroke-width="2" stroke-linecap="butt"/></svg>
<div class="t fn" style="left:63.5px;top:768.5px;font-size:26px;letter-spacing:0.603px">_aes_crypt_ecb</div>
<div class="a" style="left:9px;top:803px;width:706px;height:40px;background:#fff"></div>
<div class="a" style="left:1.500px;top:805px;width:1.600px;height:36px;background:#e6e6e6"></div><div class="a" style="left:7px;top:805px;width:1.700px;height:36px;background:#eee"></div>
<svg class="a" style="left:19px;top:807px" width="32" height="32" viewBox="0 0 32 32"><rect x="1" y="1" width="30" height="30" fill="url(#fg)" stroke="#2a68de" stroke-width="2"/><rect x="2" y="2" width="28" height="4.500" fill="url(#wt)"/><path d="M23.500 9.500c-3.800-1.200-5.400.8-6 3.800l-2.600 11c-.5 2.200-1.600 3-4 2.600" stroke="#121a40" stroke-width="2.300" fill="none" stroke-linecap="square"/><path d="M13 16.200h8.500M8.500 27.500h6" stroke="#121a40" stroke-width="2" stroke-linecap="butt"/></svg>
<div class="t fn" style="left:63.5px;top:808.5px;font-size:26px;letter-spacing:0.655px">_get_mac_addr</div>
<div class="a" style="left:9px;top:843px;width:706px;height:40px;background:#ffe0ff"></div>
<div class="a" style="left:1.500px;top:845px;width:1.600px;height:36px;background:#e6e6e6"></div><div class="a" style="left:7px;top:845px;width:1.700px;height:36px;background:#eee"></div>
<svg class="a" style="left:19px;top:847px" width="32" height="32" viewBox="0 0 32 32"><rect x="1" y="1" width="30" height="30" fill="url(#fg)" stroke="#2a68de" stroke-width="2"/><rect x="2" y="2" width="28" height="4.500" fill="url(#wt)"/><path d="M23.500 9.500c-3.800-1.200-5.400.8-6 3.800l-2.600 11c-.5 2.200-1.600 3-4 2.600" stroke="#121a40" stroke-width="2.300" fill="none" stroke-linecap="square"/><path d="M13 16.200h8.500M8.500 27.500h6" stroke="#121a40" stroke-width="2" stroke-linecap="butt"/></svg>
<div class="t fn" style="left:63.5px;top:848.5px;font-size:26px;font-weight:bold;letter-spacing:0.715px">_ioctl</div>
<div class="a" style="left:9px;top:883px;width:706px;height:40px;background:#ffe0ff"></div>
<div class="a" style="left:1.500px;top:885px;width:1.600px;height:36px;background:#e6e6e6"></div><div class="a" style="left:7px;top:885px;width:1.700px;height:36px;background:#eee"></div>
<svg class="a" style="left:19px;top:887px" width="32" height="32" viewBox="0 0 32 32"><rect x="1" y="1" width="30" height="30" fill="url(#fg)" stroke="#2a68de" stroke-width="2"/><rect x="2" y="2" width="28" height="4.500" fill="url(#wt)"/><path d="M23.500 9.500c-3.800-1.200-5.400.8-6 3.800l-2.600 11c-.5 2.200-1.600 3-4 2.600" stroke="#121a40" stroke-width="2.300" fill="none" stroke-linecap="square"/><path d="M13 16.200h8.500M8.500 27.500h6" stroke="#121a40" stroke-width="2" stroke-linecap="butt"/></svg>
<div class="t fn" style="left:63.5px;top:888.5px;font-size:26px;font-weight:bold;letter-spacing:0.426px">_close</div>
<div class="a" style="left:9px;top:923px;width:706px;height:40px;background:#ffe0ff"></div>
<div class="a" style="left:1.500px;top:925px;width:1.600px;height:36px;background:#e6e6e6"></div><div class="a" style="left:7px;top:925px;width:1.700px;height:36px;background:#eee"></div>
<svg class="a" style="left:19px;top:927px" width="32" height="32" viewBox="0 0 32 32"><rect x="1" y="1" width="30" height="30" fill="url(#fg)" stroke="#2a68de" stroke-width="2"/><rect x="2" y="2" width="28" height="4.500" fill="url(#wt)"/><path d="M23.500 9.500c-3.800-1.200-5.400.8-6 3.800l-2.600 11c-.5 2.200-1.600 3-4 2.600" stroke="#121a40" stroke-width="2.300" fill="none" stroke-linecap="square"/><path d="M13 16.200h8.500M8.500 27.500h6" stroke="#121a40" stroke-width="2" stroke-linecap="butt"/></svg>
<div class="t fn" style="left:63.5px;top:928.5px;font-size:26px;letter-spacing:0.481px">_zend_is_executing</div>
<div class="a" style="left:9px;top:963px;width:706px;height:40px;background:#ffe0ff"></div>
<div class="a" style="left:1.500px;top:965px;width:1.600px;height:36px;background:#e6e6e6"></div><div class="a" style="left:7px;top:965px;width:1.700px;height:36px;background:#eee"></div>
<svg class="a" style="left:19px;top:967px" width="32" height="32" viewBox="0 0 32 32"><rect x="1" y="1" width="30" height="30" fill="url(#fg)" stroke="#2a68de" stroke-width="2"/><rect x="2" y="2" width="28" height="4.500" fill="url(#wt)"/><path d="M23.500 9.500c-3.800-1.200-5.400.8-6 3.800l-2.600 11c-.5 2.200-1.600 3-4 2.600" stroke="#121a40" stroke-width="2.300" fill="none" stroke-linecap="square"/><path d="M13 16.200h8.500M8.500 27.500h6" stroke="#121a40" stroke-width="2" stroke-linecap="butt"/></svg>
<div class="t fn" style="left:63.5px;top:968.5px;font-size:26px;font-weight:bold;letter-spacing:0.798px">_memcmp</div>
<div class="a" style="left:9px;top:1003px;width:706px;height:40px;background:#ffe0ff"></div>
<div class="a" style="left:1.500px;top:1005px;width:1.600px;height:36px;background:#e6e6e6"></div><div class="a" style="left:7px;top:1005px;width:1.700px;height:36px;background:#eee"></div>
<svg class="a" style="left:19px;top:1007px" width="32" height="32" viewBox="0 0 32 32"><rect x="1" y="1" width="30" height="30" fill="url(#fg)" stroke="#2a68de" stroke-width="2"/><rect x="2" y="2" width="28" height="4.500" fill="url(#wt)"/><path d="M23.500 9.500c-3.800-1.200-5.400.8-6 3.800l-2.600 11c-.5 2.200-1.600 3-4 2.600" stroke="#121a40" stroke-width="2.300" fill="none" stroke-linecap="square"/><path d="M13 16.200h8.500M8.500 27.500h6" stroke="#121a40" stroke-width="2" stroke-linecap="butt"/></svg>
<div class="t fn" style="left:63.5px;top:1008.5px;font-size:26px;letter-spacing:0.648px">___tls_get_addr</div>
<div class="a" style="left:9px;top:1043px;width:706px;height:40px;background:#ffe0ff"></div>
<div class="a" style="left:1.500px;top:1045px;width:1.600px;height:36px;background:#e6e6e6"></div><div class="a" style="left:7px;top:1045px;width:1.700px;height:36px;background:#eee"></div>
<svg class="a" style="left:19px;top:1047px" width="32" height="32" viewBox="0 0 32 32"><rect x="1" y="1" width="30" height="30" fill="url(#fg)" stroke="#2a68de" stroke-width="2"/><rect x="2" y="2" width="28" height="4.500" fill="url(#wt)"/><path d="M23.500 9.500c-3.800-1.200-5.400.8-6 3.800l-2.600 11c-.5 2.200-1.600 3-4 2.600" stroke="#121a40" stroke-width="2.300" fill="none" stroke-linecap="square"/><path d="M13 16.200h8.500M8.500 27.500h6" stroke="#121a40" stroke-width="2" stroke-linecap="butt"/></svg>
<div class="t fn" style="left:63.5px;top:1048.5px;font-size:26px;font-weight:bold;letter-spacing:0.333px">_calloc</div>
<div class="a" style="left:9px;top:1083px;width:706px;height:40px;background:#ffe0ff"></div>
<div class="a" style="left:1.500px;top:1085px;width:1.600px;height:36px;background:#e6e6e6"></div><div class="a" style="left:7px;top:1085px;width:1.700px;height:36px;background:#eee"></div>
<svg class="a" style="left:19px;top:1087px" width="32" height="32" viewBox="0 0 32 32"><rect x="1" y="1" width="30" height="30" fill="url(#fg)" stroke="#2a68de" stroke-width="2"/><rect x="2" y="2" width="28" height="4.500" fill="url(#wt)"/><path d="M23.500 9.500c-3.800-1.200-5.400.8-6 3.800l-2.600 11c-.5 2.200-1.600 3-4 2.600" stroke="#121a40" stroke-width="2.300" fill="none" stroke-linecap="square"/><path d="M13 16.200h8.500M8.500 27.500h6" stroke="#121a40" stroke-width="2" stroke-linecap="butt"/></svg>
<div class="t fn" style="left:63.5px;top:1088.5px;font-size:26px;font-weight:bold;letter-spacing:1.377px">___fxstat64</div>
<div class="a" style="left:9px;top:1123px;width:706px;height:40px;background:#ffe0ff"></div>
<div class="a" style="left:1.500px;top:1125px;width:1.600px;height:36px;background:#e6e6e6"></div><div class="a" style="left:7px;top:1125px;width:1.700px;height:36px;background:#eee"></div>
<svg class="a" style="left:19px;top:1127px" width="32" height="32" viewBox="0 0 32 32"><rect x="1" y="1" width="30" height="30" fill="url(#fg)" stroke="#2a68de" stroke-width="2"/><rect x="2" y="2" width="28" height="4.500" fill="url(#wt)"/><path d="M23.500 9.500c-3.800-1.200-5.400.8-6 3.800l-2.600 11c-.5 2.200-1.600 3-4 2.600" stroke="#121a40" stroke-width="2.300" fill="none" stroke-linecap="square"/><path d="M13 16.200h8.500M8.500 27.500h6" stroke="#121a40" stroke-width="2" stroke-linecap="butt"/></svg>
<div class="t fn" style="left:63.5px;top:1128.5px;font-size:26px;font-weight:bold;letter-spacing:1.107px">_fopen64</div>
<div class="a" style="left:9px;top:1163px;width:706px;height:40px;background:#ffe0ff"></div>
<div class="a" style="left:1.500px;top:1165px;width:1.600px;height:36px;background:#e6e6e6"></div><div class="a" style="left:7px;top:1165px;width:1.700px;height:36px;background:#eee"></div>
<svg class="a" style="left:19px;top:1167px" width="32" height="32" viewBox="0 0 32 32"><rect x="1" y="1" width="30" height="30" fill="url(#fg)" stroke="#2a68de" stroke-width="2"/><rect x="2" y="2" width="28" height="4.500" fill="url(#wt)"/><path d="M23.500 9.500c-3.800-1.200-5.400.8-6 3.800l-2.600 11c-.5 2.200-1.600 3-4 2.600" stroke="#121a40" stroke-width="2.300" fill="none" stroke-linecap="square"/><path d="M13 16.200h8.500M8.500 27.500h6" stroke="#121a40" stroke-width="2" stroke-linecap="butt"/></svg>
<div class="t fn" style="left:63.5px;top:1168.5px;font-size:26px;letter-spacing:0.623px">_php_info_print_table_end</div>
</div>
<div class="a" style="left:0;top:1511px;width:715px;height:41px;background:linear-gradient(#dcdcdc,#e6e6e6 14%,#d2d2d2 55%,#aeaeae);border-top:1.300px solid #8e8e8e"></div>
<div class="t " id="l2" style="left:12px;top:1519px;font-size:26px;letter-spacing:0.358px">Line 2 of 105</div>
<div class="a" style="left:0;top:1558px;width:715px;height:45px;background:#ececec;border:1px solid #cfcfcf;border-bottom:2px solid #c4c4c4"></div>
<svg class="a" style="left:11px;top:1567px" width="32" height="30" viewBox="0 0 32 30"><g fill="#3a78d8" stroke="#1c4fb0" stroke-width="1"><rect x="11.500" y="1.500" width="9" height="8"/><rect x="1.500" y="20.500" width="6" height="7"/><rect x="9.500" y="20.500" width="6" height="7"/><rect x="17.500" y="20.500" width="6" height="7"/><rect x="25.500" y="20.500" width="5" height="7"/></g><path d="M16 10v5M4.500 20v-5h23.500v5M12.500 15v5M20.500 15v5" stroke="#1c4fb0" stroke-width="1.600" fill="none"/></svg>
<div class="t " id="gwt" style="left:52px;top:1570px;font-size:26px;letter-spacing:0.423px">Graph overview</div>
<div class="a" style="left:596px;top:1566px;width:18px;height:18px;border:2px solid #000;border-top-width:4px;background:#ededed"></div>
<svg class="a" style="left:629px;top:1567px" width="30" height="30" viewBox="0 0 30 30"><circle cx="15" cy="15" r="13.300" fill="#4c4c4c"/><circle cx="15" cy="15" r="13.300" fill="none" stroke="#8e8e8e" stroke-width="1.200"/><rect x="8" y="12.500" width="10" height="8.500" rx="1.500" fill="none" stroke="#e8e8e8" stroke-width="2.200"/><path d="M12 12v-2.500h10.500v8h-4" fill="none" stroke="#e8e8e8" stroke-width="2.200" stroke-linejoin="round"/></svg>
<svg class="a" style="left:673px;top:1567px" width="30" height="30" viewBox="0 0 30 30"><circle cx="15" cy="15" r="13.300" fill="#404040"/><circle cx="15" cy="15" r="13.300" fill="none" stroke="#8e8e8e" stroke-width="1.200"/><path d="M9.500 9.500l11 11M20.500 9.500l-11 11" stroke="#f2f2f2" stroke-width="4.200" stroke-linecap="butt"/></svg>
<div class="a" style="left:0;top:1608px;width:715px;height:222px;background:linear-gradient(#ffffff,#f2fbfe 35%,#dff5fd)"></div>
<div class="a" style="left:165px;top:1611px;width:2px;height:160px;background:repeating-linear-gradient(180deg,#111 0 2px,transparent 2px 6.300px)"></div>
<div class="a" style="left:587.500px;top:1611px;width:2px;height:160px;background:repeating-linear-gradient(180deg,#111 0 2px,transparent 2px 6.300px)"></div>
<div class="a" style="left:165px;top:1771px;width:424px;height:2px;background:repeating-linear-gradient(90deg,#111 0 2px,transparent 2px 6.300px)"></div>
<div class="a" style="left:330px;top:1608px;width:56px;height:98px;background:#fff;border:2px solid #000;box-shadow:5px 5px 2.500px rgba(0,0,0,.55);"></div>
<div class="a" style="left:357px;top:1705.500px;width:30px;height:2.500px;background:#2f8f2f"></div>
<div class="a" style="left:357px;top:1788px;width:30px;height:3.500px;background:#3f9a3f"></div>
<div class="a" style="left:328px;top:1708px;width:59px;height:80px;background:#fff;border:2px solid #000;box-shadow:5px 5px 2.500px rgba(0,0,0,.55);"></div>
<div class="a" style="left:384px;top:1710px;width:2.500px;height:78px;background:#55ad55"></div>
<div class="a" style="left:354px;top:1705px;width:4px;height:3px;background:#e00"></div>
<div class="a" style="left:354px;top:1788px;width:4px;height:4px;background:#22c"></div>
<div class="a" style="left:336px;top:1792px;width:44px;height:36px;background:#fff;border:2px solid #000;box-shadow:5px 5px 2.500px rgba(0,0,0,.55);"></div>
<div class="a" style="left:329.700px;top:1771px;width:56px;height:2px;background:repeating-linear-gradient(90deg,transparent 0 2.100px,#111 2.100px 4.100px,transparent 4.100px 6.300px)"></div>
<div class="a" style="left:722px;top:292px;width:44px;height:22px;background:#e9e9e9;border-radius:10px 0 0 0"></div>
<div class="a" style="left:3540px;top:292px;width:40px;height:22px;background:#e9e9e9;border-radius:0 10px 0 0"></div>
<div class="a" style="left:752px;top:272.500px;width:2802px;height:41px;background:#e0e0e0;border-radius:11px;box-shadow:0 0 0 1px #dadada"></div>
<div class="a" style="left:1005.500px;top:273px;width:299px;height:40px;background:#fff;border-radius:10px"></div>
<svg class="a" style="left:771px;top:281px" width="26" height="26" viewBox="0 0 26 26"><circle cx="13" cy="13" r="12" fill="#555"/><path d="M7.200 7.200l11.600 11.600M18.800 7.200l-11.600 11.600" stroke="#d2d2d2" stroke-width="2.500" stroke-linecap="butt"/></svg>
<svg class="a" style="left:804px;top:276px" width="32" height="32" viewBox="0 0 32 32"><rect x="1" y="1" width="27" height="26" fill="url(#dg)" stroke="#2a78e0" stroke-width="2"/><rect x="2" y="2" width="25" height="3.800" fill="url(#wt)"/><rect x="11.500" y="7.300" width="19.500" height="23.700" fill="url(#dg)" stroke="#1c4f9c" stroke-width="2"/><path d="M16 10.500h7.500M20.500 15.500h8M15.500 21h8M20.500 26.500h8" stroke="#59606c" stroke-width="2.200"/></svg>
<div class="t tb" style="left:845px;top:280.3px;font-size:26px;letter-spacing:0.398px">IDA View-A</div>
<svg class="a" style="left:1029px;top:281px" width="26" height="26" viewBox="0 0 26 26"><circle cx="13" cy="13" r="12" fill="#555"/><path d="M7.200 7.200l11.600 11.600M18.800 7.200l-11.600 11.600" stroke="#d2d2d2" stroke-width="2.500" stroke-linecap="butt"/></svg>
<svg class="a" style="left:1062px;top:276px" width="32" height="32" viewBox="0 0 32 32"><rect x="1" y="1" width="27" height="26" fill="url(#dg)" stroke="#2a78e0" stroke-width="2"/><rect x="2" y="2" width="25" height="3.800" fill="url(#wt)"/><rect x="11.500" y="7.300" width="19.500" height="23.700" fill="url(#dg)" stroke="#1c4f9c" stroke-width="2"/><path d="M16 10.500h7.500M20.500 15.500h8M15.500 21h8M20.500 26.500h8" stroke="#59606c" stroke-width="2.200"/></svg>
<svg class="a" style="left:1330px;top:281px" width="26" height="26" viewBox="0 0 26 26"><circle cx="13" cy="13" r="12" fill="#555"/><path d="M7.200 7.200l11.600 11.600M18.800 7.200l-11.600 11.600" stroke="#d2d2d2" stroke-width="2.500" stroke-linecap="butt"/></svg>
<svg class="a" style="left:1363px;top:276px" width="32" height="32" viewBox="0 0 32 32"><rect x="1" y="1" width="27" height="26" fill="url(#dg)" stroke="#2a78e0" stroke-width="2"/><rect x="2" y="2" width="25" height="3.800" fill="url(#wt)"/><rect x="11.500" y="7.300" width="19.500" height="23.700" fill="url(#dg)" stroke="#1c4f9c" stroke-width="2"/><path d="M16 10.500h7.500M20.500 15.500h8M15.500 21h8M20.500 26.500h8" stroke="#59606c" stroke-width="2.200"/></svg>
<div class="t tb" style="left:1405px;top:280.3px;font-size:26px;letter-spacing:0.398px">IDA View-B</div>
<div class="a" style="left:1563px;top:282px;width:2px;height:24px;background:#c8c8c8"></div>
<svg class="a" style="left:1589px;top:281px" width="26" height="26" viewBox="0 0 26 26"><circle cx="13" cy="13" r="12" fill="#555"/><path d="M7.200 7.200l11.600 11.600M18.800 7.200l-11.600 11.600" stroke="#d2d2d2" stroke-width="2.500" stroke-linecap="butt"/></svg>
<svg class="a" style="left:1622px;top:276px" width="32" height="32" viewBox="0 0 32 32"><rect x="1" y="1" width="27" height="26" fill="url(#dg)" stroke="#2a78e0" stroke-width="2"/><rect x="2" y="2" width="25" height="3.800" fill="url(#wt)"/><rect x="11.500" y="7.300" width="19.500" height="23.700" fill="url(#dg)" stroke="#1c4f9c" stroke-width="2"/><path d="M16 10.500h7.500M20.500 15.500h8M15.500 21h8M20.500 26.500h8" stroke="#59606c" stroke-width="2.200"/></svg>
<div class="t tb" style="left:1663px;top:280.3px;font-size:26px;letter-spacing:0.405px">IDA View-C</div>
<div class="a" style="left:1822px;top:282px;width:2px;height:24px;background:#c8c8c8"></div>
<svg class="a" style="left:1847px;top:281px" width="26" height="26" viewBox="0 0 26 26"><circle cx="13" cy="13" r="12" fill="#555"/><path d="M7.200 7.200l11.600 11.600M18.800 7.200l-11.600 11.600" stroke="#d2d2d2" stroke-width="2.500" stroke-linecap="butt"/></svg>
<svg class="a" style="left:1880px;top:276px" width="32" height="32" viewBox="0 0 32 32"><rect x="1" y="1" width="27" height="26" fill="url(#dg)" stroke="#2a78e0" stroke-width="2"/><rect x="2" y="2" width="25" height="3.800" fill="url(#wt)"/><rect x="11.500" y="7.300" width="19.500" height="23.700" fill="url(#dg)" stroke="#1c4f9c" stroke-width="2"/><path d="M16 10.500h7.500M20.500 15.500h8M15.500 21h8M20.500 26.500h8" stroke="#59606c" stroke-width="2.200"/></svg>
<div class="t tb" style="left:1921px;top:280.3px;font-size:26px;letter-spacing:0.62px">Pseudocode-B</div>
<div class="a" style="left:2122px;top:282px;width:2px;height:24px;background:#c8c8c8"></div>
<svg class="a" style="left:2146px;top:281px" width="26" height="26" viewBox="0 0 26 26"><circle cx="13" cy="13" r="12" fill="#555"/><path d="M7.200 7.200l11.600 11.600M18.800 7.200l-11.600 11.600" stroke="#d2d2d2" stroke-width="2.500" stroke-linecap="butt"/></svg>
<svg class="a" style="left:2179px;top:276px" width="32" height="32" viewBox="0 0 32 32"><rect x="1" y="1" width="27" height="26" fill="url(#dg)" stroke="#2a78e0" stroke-width="2"/><rect x="2" y="2" width="25" height="3.800" fill="url(#wt)"/><rect x="11.500" y="7.300" width="19.500" height="23.700" fill="url(#dg)" stroke="#1c4f9c" stroke-width="2"/><path d="M16 10.500h7.500M20.500 15.500h8M15.500 21h8M20.500 26.500h8" stroke="#59606c" stroke-width="2.200"/></svg>
<div class="t tb" style="left:2221px;top:280.3px;font-size:26px;letter-spacing:0.62px">Pseudocode-A</div>
<div class="a" style="left:2422px;top:282px;width:2px;height:24px;background:#c8c8c8"></div>
<svg class="a" style="left:2447px;top:281px" width="26" height="26" viewBox="0 0 26 26"><circle cx="13" cy="13" r="12" fill="#555"/><path d="M7.200 7.200l11.600 11.600M18.800 7.200l-11.600 11.600" stroke="#d2d2d2" stroke-width="2.500" stroke-linecap="butt"/></svg>
<svg class="a" style="left:2480px;top:276px" width="30" height="30" viewBox="0 0 30 30"><rect x="1" y="1" width="28" height="28" fill="#fbfeff" stroke="#2470dc" stroke-width="2"/><rect x="2" y="2" width="26" height="4" fill="url(#wt)"/><path d="M15 8.500l7.500 4v8.500l-7.500 4-7.500-4v-8.500z" fill="#dfeafc" stroke="#2a2af0" stroke-width="2.400" stroke-linejoin="round"/></svg>
<div class="t tb" style="left:2521px;top:280.3px;font-size:26px;letter-spacing:0.214px">Hex View-1</div>
<div class="a" style="left:2678px;top:282px;width:2px;height:24px;background:#c8c8c8"></div>
<svg class="a" style="left:2703px;top:281px" width="26" height="26" viewBox="0 0 26 26"><circle cx="13" cy="13" r="12" fill="#555"/><path d="M7.200 7.200l11.600 11.600M18.800 7.200l-11.600 11.600" stroke="#d2d2d2" stroke-width="2.500" stroke-linecap="butt"/></svg>
<svg class="a" style="left:2736px;top:276px" width="30" height="30" viewBox="0 0 30 30"><rect x="1" y="1" width="28" height="28" fill="#fbfeff" stroke="#2470dc" stroke-width="2"/><rect x="2" y="2" width="26" height="4" fill="url(#wt)"/><path d="M8.500 27l5-18h3l5 18M11 21h8.500" fill="none" stroke="#24308c" stroke-width="2.800"/><path d="M13 16h4.500" stroke="#9ab0e8" stroke-width="2"/></svg>
<div class="t tb" style="left:2777px;top:280.3px;font-size:26px;letter-spacing:0.721px">Structures</div>
<div class="a" style="left:2926px;top:282px;width:2px;height:24px;background:#c8c8c8"></div>
<svg class="a" style="left:2951px;top:281px" width="26" height="26" viewBox="0 0 26 26"><circle cx="13" cy="13" r="12" fill="#555"/><path d="M7.200 7.200l11.600 11.600M18.800 7.200l-11.600 11.600" stroke="#d2d2d2" stroke-width="2.500" stroke-linecap="butt"/></svg>
<svg class="a" style="left:2984px;top:276px" width="30" height="30" viewBox="0 0 30 30"><rect x="1" y="1" width="28" height="28" fill="#fbfeff" stroke="#2470dc" stroke-width="2"/><rect x="2" y="2" width="26" height="4" fill="url(#wt)"/><path d="M13 11h12M13 18h9M13 25h12" stroke="#2a4a9a" stroke-width="2.200"/><path d="M6.500 8v19" stroke="#2a6fd6" stroke-width="1.400" stroke-dasharray="2 2"/><path d="M6.500 8.500l2.500 2.500-2.500 2.500-2.500-2.500zM6.500 15.500l2.500 2.500-2.500 2.500-2.500-2.500zM6.500 22.500l2.500 2.500-2.500 2.500-2.500-2.500z" fill="#2a6fd6"/></svg>
<div class="t tb" style="left:3025px;top:280.3px;font-size:26px;letter-spacing:-0.244px">Enums</div>
<div class="a" style="left:3128px;top:282px;width:2px;height:24px;background:#c8c8c8"></div>
<svg class="a" style="left:3153px;top:281px" width="26" height="26" viewBox="0 0 26 26"><circle cx="13" cy="13" r="12" fill="#555"/><path d="M7.200 7.200l11.600 11.600M18.800 7.200l-11.600 11.600" stroke="#d2d2d2" stroke-width="2.500" stroke-linecap="butt"/></svg>
<svg class="a" style="left:3186px;top:276px" width="32" height="32" viewBox="0 0 34 34"><rect x="1" y="1" width="26" height="22" fill="#eef8ff" stroke="#2a6fd6" stroke-width="2"/><rect x="2" y="2" width="24" height="5" fill="#3f8ae6"/><rect x="12" y="9" width="20" height="23" fill="#fff" stroke="#1c3f8c" stroke-width="2"/><path d="M17 14h12M17 18h12M17 22h12M17 26h12" stroke="#1c3fb0" stroke-width="2.400"/><path d="M3 13l8 0M8 9l-5 4 5 4" stroke="#0a8a1a" stroke-width="3" fill="none"/><path d="M1 8l3 3" stroke="#111" stroke-width="2"/></svg>
<div class="t tb" style="left:3227px;top:280.3px;font-size:26px;letter-spacing:0.688px">Imports</div>
<div class="a" style="left:3342px;top:282px;width:2px;height:24px;background:#c8c8c8"></div>
<svg class="a" style="left:3367px;top:281px" width="26" height="26" viewBox="0 0 26 26"><circle cx="13" cy="13" r="12" fill="#555"/><path d="M7.200 7.200l11.600 11.600M18.800 7.200l-11.600 11.600" stroke="#d2d2d2" stroke-width="2.500" stroke-linecap="butt"/></svg>
<svg class="a" style="left:3400px;top:276px" width="32" height="32" viewBox="0 0 34 34"><rect x="8" y="1" width="24" height="20" fill="#eef8ff" stroke="#2a6fd6" stroke-width="2"/><rect x="9" y="2" width="22" height="5" fill="#3f8ae6"/><rect x="1" y="10" width="20" height="22" fill="#fff" stroke="#1c3f8c" stroke-width="2"/><path d="M4 15h10M4 19h10M4 23h14M4 27h14" stroke="#1c3fb0" stroke-width="2.400"/><path d="M14 15h10M20 10l6 5-6 5" stroke="#0a8a1a" stroke-width="3.200" fill="none"/></svg>
<div class="t tb" style="left:3441px;top:280.3px;font-size:26px;letter-spacing:0.408px">Exports</div>
<div class="a" style="left:722px;top:314px;width:2859px;height:1471px;background:#fff"></div>
<div class="a" style="left:722px;top:1784px;width:58.500px;height:46px;background:#fff"></div>
<div class="a" style="left:780px;top:313.500px;width:2802px;height:1.500px;background:#a8a8a8"></div>
<div class="a" style="left:3580.500px;top:314px;width:1.500px;height:1514.500px;background:#b4b4b4"></div>
<div class="a" style="left:780.200px;top:314px;width:1.400px;height:1470px;background:#9c9c9c"></div>
<div class="a" style="left:716px;top:272px;width:6px;height:1558px;background:#ececec"></div>
<div class="t mono ln" style="left:716px;width:60.200px;text-align:right;top:315.5px;color:#808080">1</div>
<div class="t mono cl" style="left:782.200px;top:315.5px"><span style="color:#808080;background:#ffff00">__int64</span><span style="color:#808080"> __fastcall get_mac_addr(</span><span style="color:#808080;background:#ffff00">__int64</span><span style="color:#808080"> a1)</span></div>
<div class="t mono ln" style="left:716px;width:60.200px;text-align:right;top:335.5px;color:#808080">2</div>
<div class="t mono cl" style="left:782.200px;top:335.5px"><span style="color:#00007f">{</span></div>
<div class="t mono ln" style="left:716px;width:60.200px;text-align:right;top:355.5px;color:#808080">3</div>
<div class="t mono cl" style="left:782.200px;top:355.5px"><span style="color:#00007f">  </span><span style="color:#808080;background:#ffff00">__int64</span><span style="color:#808080"> v1</span><span style="color:#00007f">; </span><span style="color:#0000ff">// </span><span style="color:#8080ff">rbx</span></div>
<div class="t mono ln" style="left:716px;width:60.200px;text-align:right;top:375.5px;color:#808080">4</div>
<div class="t mono cl" style="left:782.200px;top:375.5px"><span style="color:#00007f">  int v2; </span><span style="color:#0000ff">// </span><span style="color:#8080ff">eax</span></div>
<div class="t mono ln" style="left:716px;width:60.200px;text-align:right;top:395.5px;color:#808080">5</div>
<div class="t mono cl" style="left:782.200px;top:395.5px"><span style="color:#00007f">  const char *v3; </span><span style="color:#0000ff">// </span><span style="color:#8080ff">rdi</span></div>
<div class="t mono ln" style="left:716px;width:60.200px;text-align:right;top:415.5px;color:#808080">6</div>
<div class="t mono cl" style="left:782.200px;top:415.5px"><span style="color:#00007f">  int v4; </span><span style="color:#0000ff">// </span><span style="color:#8080ff">ebp</span></div>
<div class="t mono ln" style="left:716px;width:60.200px;text-align:right;top:435.5px;color:#808080">7</div>
<div class="t mono cl" style="left:782.200px;top:435.5px"><span style="color:#00007f">  char *v5; </span><span style="color:#0000ff">// </span><span style="color:#8080ff">rax</span></div>
<div class="t mono ln" style="left:716px;width:60.200px;text-align:right;top:455.5px;color:#808080">8</div>
<div class="t mono cl" style="left:782.200px;top:455.5px"><span style="color:#00007f">  </span><span style="color:#808080;background:#ffff00">__int64</span><span style="color:#808080"> v7</span><span style="color:#00007f">; </span><span style="color:#0000ff">// </span><span style="color:#8080ff">[rsp+0h] [rbp-48h]</span></div>
<div class="t mono ln" style="left:716px;width:60.200px;text-align:right;top:475.5px;color:#808080">9</div>
<div class="t mono cl" style="left:782.200px;top:475.5px"><span style="color:#00007f">  unsigned __int8 v8; </span><span style="color:#0000ff">// </span><span style="color:#8080ff">[rsp+15h] [rbp-33h]</span></div>
<div class="t mono ln" style="left:716px;width:60.200px;text-align:right;top:495.5px;color:#808080">10</div>
<div class="t mono cl" style="left:782.200px;top:495.5px"><span style="color:#00007f">  unsigned __int8 v9; </span><span style="color:#0000ff">// </span><span style="color:#8080ff">[rsp+16h] [rbp-32h]</span></div>
<div class="t mono ln" style="left:716px;width:60.200px;text-align:right;top:515.5px;color:#808080">11</div>
<div class="t mono cl" style="left:782.200px;top:515.5px"><span style="color:#00007f">  unsigned __int8 v10; </span><span style="color:#0000ff">// </span><span style="color:#8080ff">[rsp+17h] [rbp-31h]</span></div>
<div class="t mono ln" style="left:716px;width:60.200px;text-align:right;top:535.5px;color:#808080">12</div>
<div class="t mono ln" style="left:716px;width:60.200px;text-align:right;top:555.5px;color:#808080">13</div>
<div class="a" style="left:729px;top:559.5px;width:11.500px;height:11.500px;border-radius:50%;background:#5ac8fa"></div>
<div class="t mono cl" style="left:782.200px;top:555.5px"><span style="color:#8080ff">  v1</span><span style="color:#00007f"> = </span><span style="color:#8080ff">a1</span><span style="color:#00007f">;</span></div>
<div class="t mono ln" style="left:716px;width:60.200px;text-align:right;top:575.5px;color:#808080">14</div>
<div class="a" style="left:729px;top:579.5px;width:11.500px;height:11.500px;border-radius:50%;background:#5ac8fa"></div>
<div class="t mono cl" style="left:782.200px;top:575.5px"><span style="color:#8080ff">  v2</span><span style="color:#00007f"> = </span><span style="color:#0000ff">socket</span><span style="color:#00007f">(2, 1, 0);</span></div>
<div class="t mono ln" style="left:716px;width:60.200px;text-align:right;top:595.5px;color:#808080">15</div>
<div class="a" style="left:729px;top:599.5px;width:11.500px;height:11.500px;border-radius:50%;background:#5ac8fa"></div>
<div class="t mono cl" style="left:782.200px;top:595.5px"><span style="color:#8080ff">  v3</span><span style="color:#00007f"> = </span><span style="color:#008000">"socket"</span><span style="color:#00007f">;</span></div>
<div class="t mono ln" style="left:716px;width:60.200px;text-align:right;top:615.5px;color:#808080">16</div>
<div class="a" style="left:729px;top:619.5px;width:11.500px;height:11.500px;border-radius:50%;background:#5ac8fa"></div>
<div class="t mono cl" style="left:782.200px;top:615.5px"><span style="color:#00007f">  if ( </span><span style="color:#8080ff">v2</span><span style="color:#00007f"> &gt;= 0 )</span></div>
<div class="t mono ln" style="left:716px;width:60.200px;text-align:right;top:635.5px;color:#808080">17</div>
<div class="t mono cl" style="left:782.200px;top:635.5px"><span style="color:#00007f">  {</span></div>
<div class="t mono ln" style="left:716px;width:60.200px;text-align:right;top:655.5px;color:#808080">18</div>
<div class="a" style="left:729px;top:659.5px;width:11.500px;height:11.500px;border-radius:50%;background:#5ac8fa"></div>
<div class="t mono cl" style="left:782.200px;top:655.5px"><span style="color:#8080ff">    v4</span><span style="color:#00007f"> = </span><span style="color:#8080ff">v2</span><span style="color:#00007f">;</span></div>
<div class="t mono ln" style="left:716px;width:60.200px;text-align:right;top:675.5px;color:#808080">19</div>
<div class="a" style="left:729px;top:679.5px;width:11.500px;height:11.500px;border-radius:50%;background:#5ac8fa"></div>
<div class="t mono cl" style="left:782.200px;top:675.5px"><span style="color:#8080ff">    v5</span><span style="color:#00007f"> = </span><span style="color:#0000ff">strcpy</span><span style="color:#00007f">((</span><span style="color:#808080">char *</span><span style="color:#00007f">)&amp;</span><span style="color:#8080ff">v7</span><span style="color:#00007f">, </span><span style="color:#008000">"eth0"</span><span style="color:#00007f">);</span></div>
<div class="t mono ln" style="left:716px;width:60.200px;text-align:right;top:695.5px;color:#808080">20</div>
<div class="a" style="left:729px;top:699.5px;width:11.500px;height:11.500px;border-radius:50%;background:#5ac8fa"></div>
<div class="t mono cl" style="left:782.200px;top:695.5px"><span style="color:#00007f">    if ( </span><span style="color:#0000ff">ioctl</span><span style="color:#00007f">(</span><span style="color:#8080ff">v4</span><span style="color:#00007f">, 0x8927uLL, </span><span style="color:#8080ff">v5</span><span style="color:#00007f">) &gt;= 0 )</span></div>
<div class="t mono ln" style="left:716px;width:60.200px;text-align:right;top:715.5px;color:#808080">21</div>
<div class="t mono cl" style="left:782.200px;top:715.5px"><span style="color:#00007f">    {</span></div>
<div class="t mono ln" style="left:716px;width:60.200px;text-align:right;top:735.5px;color:#808080">22</div>
<div class="a" style="left:729px;top:739.5px;width:11.500px;height:11.500px;border-radius:50%;background:#5ac8fa"></div>
<div class="t mono cl" style="left:782.200px;top:735.5px"><span style="color:#0000ff">      php_sprintf</span><span style="color:#00007f">(</span><span style="color:#8080ff">v1</span><span style="color:#00007f">, &amp;</span><span style="color:#0000ff">unk_38FA</span><span style="color:#00007f">, </span><span style="color:#8080ff">v8</span><span style="color:#00007f">, </span><span style="color:#8080ff">v9</span><span style="color:#00007f">, </span><span style="color:#8080ff">v10</span><span style="color:#00007f">);</span></div>
<div class="t mono ln" style="left:716px;width:60.200px;text-align:right;top:755.5px;color:#808080">23</div>
<div class="a" style="left:729px;top:759.5px;width:11.500px;height:11.500px;border-radius:50%;background:#5ac8fa"></div>
<div class="t mono cl" style="left:782.200px;top:755.5px"><span style="color:#00007f">      return </span><span style="color:#8080ff">v1</span><span style="color:#00007f">;</span></div>
<div class="t mono ln" style="left:716px;width:60.200px;text-align:right;top:775.5px;color:#808080">24</div>
<div class="t mono cl" style="left:782.200px;top:775.5px"><span style="color:#00007f">    }</span></div>
<div class="t mono ln" style="left:716px;width:60.200px;text-align:right;top:795.5px;color:#808080">25</div>
<div class="a" style="left:729px;top:799.5px;width:11.500px;height:11.500px;border-radius:50%;background:#5ac8fa"></div>
<div class="t mono cl" style="left:782.200px;top:795.5px"><span style="color:#8080ff">    v3</span><span style="color:#00007f"> = </span><span style="color:#008000">"ioctl"</span><span style="color:#00007f">;</span></div>
<div class="t mono ln" style="left:716px;width:60.200px;text-align:right;top:815.5px;color:#808080">26</div>
<div class="t mono cl" style="left:782.200px;top:815.5px"><span style="color:#00007f">  }</span></div>
<div class="t mono ln" style="left:716px;width:60.200px;text-align:right;top:835.5px;color:#808080">27</div>
<div class="a" style="left:729px;top:839.5px;width:11.500px;height:11.500px;border-radius:50%;background:#5ac8fa"></div>
<div class="t mono cl" style="left:782.200px;top:835.5px"><span style="color:#0000ff">  perror</span><span style="color:#00007f">(</span><span style="color:#8080ff">v3</span><span style="color:#00007f">);</span></div>
<div class="t mono ln" style="left:716px;width:60.200px;text-align:right;top:855.5px;color:#808080">28</div>
<div class="a" style="left:729px;top:859.5px;width:11.500px;height:11.500px;border-radius:50%;background:#5ac8fa"></div>
<div class="t mono cl" style="left:782.200px;top:855.5px"><span style="color:#00007f">  return 0LL;</span></div>
<div class="t mono ln" style="left:716px;width:60.200px;text-align:right;top:875.5px;color:#808080">29</div>
<div class="a" style="left:729px;top:879.5px;width:11.500px;height:11.500px;border-radius:50%;background:#5ac8fa"></div>
<div class="t mono cl" style="left:782.200px;top:875.5px"><span style="color:#00007f">}</span></div>
<div class="a" style="left:780px;top:1784px;width:2800.500px;height:44.500px;background:linear-gradient(#dadada,#e8e8e8 16%,#d2d2d2 60%,#aaaaaa);border-top:1.300px solid #868686;border-bottom:2px solid #c8c8c8"></div>
<div class="t " id="cst" style="left:784.5px;top:1794px;font-size:26px;letter-spacing:0.454px">000036EF  get_mac_addr:1 (36EF)</div>
<div class="a" style="left:0;top:1836px;width:3582px;height:45.500px;background:#ececec;border:1px solid #d4d4d4;border-bottom:2px solid #b8b8b8"></div>
<svg class="a" style="left:11px;top:1844px" width="30" height="32" viewBox="0 0 30 32"><rect x="1" y="1" width="28" height="30" fill="#f6f6f6" stroke="#9a9a9a" stroke-width="1.500"/><rect x="1" y="1" width="28" height="5" fill="#2a6fd6"/><rect x="14" y="1" width="15" height="3" fill="#36b0a0"/><path d="M6 12h18M6 16h18M6 20h18M6 24h18M6 28h14" stroke="#555" stroke-width="1.600"/></svg>
<div class="t " id="owt" style="left:52.5px;top:1847px;font-size:26px;letter-spacing:0.824px">Output window</div>
<div class="a" style="left:3464px;top:1844px;width:18px;height:18px;border:2px solid #000;border-top-width:4px;background:#ededed"></div>
<svg class="a" style="left:3497px;top:1845px" width="30" height="30" viewBox="0 0 30 30"><circle cx="15" cy="15" r="13.300" fill="#4c4c4c"/><circle cx="15" cy="15" r="13.300" fill="none" stroke="#8e8e8e" stroke-width="1.200"/><rect x="8" y="12.500" width="10" height="8.500" rx="1.500" fill="none" stroke="#e8e8e8" stroke-width="2.200"/><path d="M12 12v-2.500h10.500v8h-4" fill="none" stroke="#e8e8e8" stroke-width="2.200" stroke-linejoin="round"/></svg>
<svg class="a" style="left:3541px;top:1845px" width="30" height="30" viewBox="0 0 30 30"><circle cx="15" cy="15" r="13.300" fill="#404040"/><circle cx="15" cy="15" r="13.300" fill="none" stroke="#8e8e8e" stroke-width="1.200"/><path d="M9.500 9.500l11 11M20.500 9.500l-11 11" stroke="#f2f2f2" stroke-width="4.200" stroke-linecap="butt"/></svg>
<div class="a" style="left:0;top:1885.500px;width:3582px;height:45.500px;background:#fff;border:1px solid #bdbdbd;border-top:1.500px solid #a8a8a8;overflow:hidden"><div class="t mono" style="left:10px;top:3px;color:#000">18F0: using guessed type __int64 __fastcall php_sprintf(_QWORD, _QWORD, _QWORD, _QWORD, _QWORD);
18F0: using guessed type __int64 __fastcall php_sprintf(_QWORD, _QWORD, _QWORD, _QWORD, _QWORD);</div></div>
<div class="a" style="left:12px;top:1956px;width:116px;height:32px;background:#fff;border-radius:8px;box-shadow:0 0 0 1px #dcdcdc,0 1px 2px rgba(0,0,0,.25)"></div>
<div class="t " id="py" style="left:28px;top:1959px;font-size:26px;letter-spacing:0.426px">Python</div>
<div class="a" style="left:136px;top:1941px;width:3445px;height:53px;background:#fff;border:1px solid #d6d6d6;border-bottom:2px solid #c0c0c0"></div>
<div class="a" style="left:0;top:2010px;width:3584px;height:42px;background:linear-gradient(#d4d4d4,#e8e8e8 22%,#d6d6d6 50%,#aaaaaa 80%,#8e8e8e);border-top:1.500px solid #868686"></div>
<div class="t " id="sb1" style="left:5px;top:2019.2px;font-size:26px;letter-spacing:0.171px">AU:  idle</div>
<div class="t " id="sb2" style="left:156px;top:2019.2px;font-size:26px;letter-spacing:0.382px">Down</div>
<div class="t " id="sb3" style="left:308.3px;top:2019.2px;font-size:26px;letter-spacing:0.205px">Disk: 570GB</div>
<div class="t " id="wm" style="left:3360px;top:1955px;font-size:44px;color:rgba(130,130,130,.42);letter-spacing:4.122px;-webkit-text-stroke:0.7px rgba(130,130,130,.42)">aury.Net</div>
<svg class="a" style="left:3303px;top:1934px;opacity:.38" width="56" height="74" viewBox="0 0 62 80"><path d="M4 14l26-12 26 12-2 30c-2 14-12 24-24 32-12-8-22-18-24-32z" fill="#e8cfa0"/><path d="M30 2l26 12-2 10-24-8z" fill="#e07050"/><path d="M54 22c-16-4-34 2-34 12s22 6 20 18-18 14-24 10c8 10 30 4 34-10s-14-14-14-20 10-8 18-6z" fill="#6aa8d8"/><path d="M16 64c8 6 20 6 28-2-4 8-10 12-14 14-6-2-10-6-14-12z" fill="#4060c0"/></svg>
<div class="a" style="left:3306px;top:2014px;width:56px;height:1.500px;background:rgba(120,120,120,.45)"></div>
<div class="a" style="left:3488px;top:2014px;width:64px;height:1.500px;background:rgba(120,120,120,.45)"></div>
<svg class="a" style="left:3373px;top:2006px" width="112" height="16" viewBox="0 0 112 16"><g stroke="rgba(110,110,110,.5)" stroke-width="1.400" fill="none" transform="skewX(-10) translate(3,0)"><path d="M3.0 4h9M7.5 1v12M4.0 8h8M3.0 13l3-3M12.0 13l-3-3" /><path d="M20.5 4h9M25.0 1v12M21.5 8h8M20.5 13l3-3M29.5 13l-3-3" /><path d="M38.0 4h9M42.5 1v12M39.0 8h8M38.0 13l3-3M47.0 13l-3-3" /><path d="M55.5 4h9M60.0 1v12M56.5 8h8M55.5 13l3-3M64.5 13l-3-3" /><path d="M73.0 4h9M77.5 1v12M74.0 8h8M73.0 13l3-3M82.0 13l-3-3" /><path d="M90.5 4h9M95.0 1v12M91.5 8h8M90.5 13l3-3M99.5 13l-3-3" /></g></svg>
<div class="a" style="left:0;top:2030px;width:22px;height:22px;background:radial-gradient(circle at 100% 0,transparent 21px,#1e2a44 22px)"></div>
<div class="a" style="left:3562px;top:2030px;width:22px;height:22px;background:radial-gradient(circle at 0 0,transparent 21px,#1e2a44 22px)"></div>
<div class="a" style="left:0;top:0;width:22px;height:22px;background:radial-gradient(circle at 100% 100%,transparent 20px,#5b9be8 21px)"></div>
<div class="a" style="left:3562px;top:0;width:22px;height:22px;background:radial-gradient(circle at 0 100%,transparent 21px,#2a3a6a 22px)"></div>
</body></html>
